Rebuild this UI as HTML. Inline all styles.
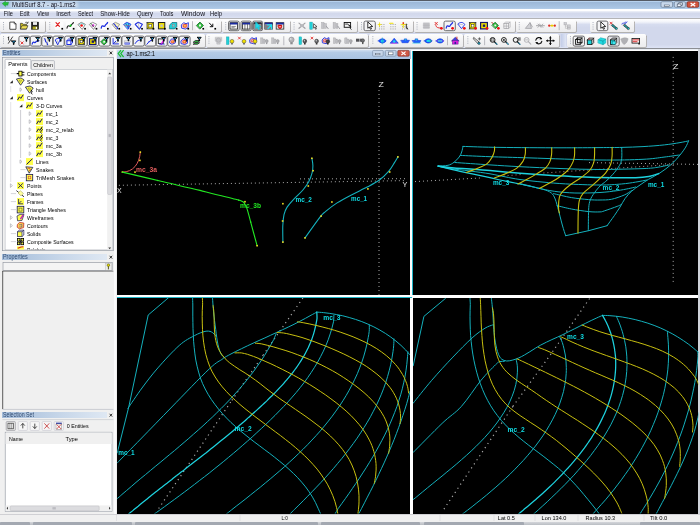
<!DOCTYPE html>
<html>
<head>
<meta charset="utf-8">
<title>MultiSurf 8.7 - ap-1.ms2</title>
<style>
html,body{margin:0;padding:0;}
body{width:700px;height:525px;overflow:hidden;position:relative;background:#d5dcee;font-family:"Liberation Sans",sans-serif;}
.a{position:absolute;}
svg{position:absolute;left:0;top:0;}
svg text{font-family:"Liberation Sans",sans-serif;white-space:pre;}
</style>
</head>
<body>
<div class="a" style="left:0px;top:0px;width:700px;height:9px;background:linear-gradient(#97b3d3,#a2bedd 50%,#abc7e5 92%,#b9d2ec);"></div>
<div class="a" style="left:0px;top:0px;width:700px;height:0.9px;background:#555c66;"></div>
<div class="a" style="left:0px;top:0.9px;width:700px;height:0.8px;background:#b7d2ee;"></div>
<div class="a" style="left:0px;top:9px;width:700px;height:9.6px;background:linear-gradient(#ffffff,#ffffff 20%,#e4e8f4 26%,#d3d9ec 45%,#d5dbee 70%,#e1e7f8);"></div>
<div class="a" style="left:0px;top:17.8px;width:700px;height:0.9px;background:#b4b4b6;"></div>
<div class="a" style="left:0px;top:18.7px;width:700px;height:29.4px;background:linear-gradient(#ffffff,#f2f4fa 10%,#d6dcef 19%,#d2d8ec 30%,#d2d8ec 88%,#dde3f5);"></div>
<div class="a" style="left:0px;top:47.8px;width:700px;height:1.2px;background:#8c8e94;"></div>
<div class="a" style="left:0px;top:19.5px;width:45.3px;height:12.5px;background:linear-gradient(#fdfdfd,#f3f3f4 50%,#ececee);border-radius:1.5px;box-shadow:0.7px 0.7px 0 #a8a49c;"></div>
<div class="a" style="left:46.3px;top:19.5px;width:175.10000000000002px;height:12.5px;background:linear-gradient(#fdfdfd,#f3f3f4 50%,#ececee);border-radius:1.5px;box-shadow:0.7px 0.7px 0 #a8a49c;"></div>
<div class="a" style="left:222.3px;top:19.5px;width:67.39999999999998px;height:12.5px;background:linear-gradient(#fdfdfd,#f3f3f4 50%,#ececee);border-radius:1.5px;box-shadow:0.7px 0.7px 0 #a8a49c;"></div>
<div class="a" style="left:290.6px;top:19.5px;width:66.39999999999998px;height:12.5px;background:linear-gradient(#fdfdfd,#f3f3f4 50%,#ececee);border-radius:1.5px;box-shadow:0.7px 0.7px 0 #a8a49c;"></div>
<div class="a" style="left:358px;top:19.5px;width:54.60000000000002px;height:12.5px;background:linear-gradient(#fdfdfd,#f3f3f4 50%,#ececee);border-radius:1.5px;box-shadow:0.7px 0.7px 0 #a8a49c;"></div>
<div class="a" style="left:413.6px;top:19.5px;width:101.0px;height:12.5px;background:linear-gradient(#fdfdfd,#f3f3f4 50%,#ececee);border-radius:1.5px;box-shadow:0.7px 0.7px 0 #a8a49c;"></div>
<div class="a" style="left:515.8px;top:19.5px;width:60.60000000000002px;height:12.5px;background:linear-gradient(#fdfdfd,#f3f3f4 50%,#ececee);border-radius:1.5px;box-shadow:0.7px 0.7px 0 #a8a49c;"></div>
<div class="a" style="left:589.6px;top:19.5px;width:44.799999999999955px;height:12.5px;background:linear-gradient(#fdfdfd,#f3f3f4 50%,#ececee);border-radius:1.5px;box-shadow:0.7px 0.7px 0 #a8a49c;"></div>
<div class="a" style="left:0px;top:33.6px;width:204.6px;height:13.399999999999999px;background:linear-gradient(#fdfdfd,#f3f3f4 50%,#ececee);border-radius:1.5px;box-shadow:0.7px 0.7px 0 #a8a49c;"></div>
<div class="a" style="left:205.5px;top:33.6px;width:162.89999999999998px;height:13.399999999999999px;background:linear-gradient(#fdfdfd,#f3f3f4 50%,#ececee);border-radius:1.5px;box-shadow:0.7px 0.7px 0 #a8a49c;"></div>
<div class="a" style="left:369.4px;top:33.6px;width:94.10000000000002px;height:13.399999999999999px;background:linear-gradient(#fdfdfd,#f3f3f4 50%,#ececee);border-radius:1.5px;box-shadow:0.7px 0.7px 0 #a8a49c;"></div>
<div class="a" style="left:464.4px;top:33.6px;width:94.20000000000005px;height:13.399999999999999px;background:linear-gradient(#fdfdfd,#f3f3f4 50%,#ececee);border-radius:1.5px;box-shadow:0.7px 0.7px 0 #a8a49c;"></div>
<div class="a" style="left:567px;top:33.6px;width:78.70000000000005px;height:13.399999999999999px;background:linear-gradient(#fdfdfd,#f3f3f4 50%,#ececee);border-radius:1.5px;box-shadow:0.7px 0.7px 0 #a8a49c;"></div>
<div class="a" style="left:560.7px;top:33.6px;width:5px;height:13.4px;background:linear-gradient(90deg,#c3cde8,#dfe5f4);"></div>
<div class="a" style="left:0px;top:48.5px;width:116.5px;height:465.5px;background:#f0f0f0;"></div>
<div class="a" style="left:113.8px;top:48.5px;width:2.7px;height:465.5px;background:#fbfbfc;"></div>
<div class="a" style="left:2.4px;top:49.9px;width:105px;height:6px;background:linear-gradient(90deg,#a3bcda,#c9d8ea 60%,#dfe8f3);"></div>
<div class="a" style="left:2.4px;top:254.2px;width:105px;height:6px;background:linear-gradient(90deg,#a3bcda,#c9d8ea 60%,#dfe8f3);"></div>
<div class="a" style="left:2.4px;top:412.2px;width:105px;height:6px;background:linear-gradient(90deg,#a3bcda,#c9d8ea 60%,#dfe8f3);"></div>
<div class="a" style="left:116.5px;top:48.5px;width:583.5px;height:465.5px;background:#ffffff;"></div>
<div class="a" style="left:116.5px;top:48.6px;width:294px;height:10px;background:linear-gradient(#dbe6f4,#b4cbe6 35%,#a9c3e2);"></div>
<div class="a" style="left:116.5px;top:48.5px;width:583.5px;height:1px;background:#e8ecf2;"></div>
<div class="a" style="left:117.2px;top:58.6px;width:292.8px;height:236.2px;background:#000;"></div>
<div class="a" style="left:413px;top:51.4px;width:285.6px;height:243.8px;background:#000;"></div>
<div class="a" style="left:117.2px;top:297.6px;width:292.8px;height:216px;background:#000;"></div>
<div class="a" style="left:413px;top:298.2px;width:285.6px;height:215.4px;background:#000;"></div>
<div class="a" style="left:412.1px;top:51.4px;width:0.9px;height:244px;background:#1fb6c8;"></div>
<div class="a" style="left:116.5px;top:296.6px;width:295.6px;height:0.9px;background:#1fb6c8;"></div>
<div class="a" style="left:698.4px;top:48.5px;width:1.6px;height:465.5px;background:#cfd3da;"></div>
<div class="a" style="left:0px;top:513.8px;width:700px;height:7.8px;background:#f0f0f0;"></div>
<div class="a" style="left:0px;top:513.6px;width:700px;height:0.6px;background:#d0d0d4;"></div>
<div class="a" style="left:0px;top:521.6px;width:700px;height:3.4px;background:linear-gradient(#d4d6da,#b9bdc3);"></div>
<div class="a" style="left:0px;top:522.4px;width:30px;height:2.6px;background:#a3a8b1;border-radius:1px 1px 0 0;"></div>
<div class="a" style="left:33px;top:522.4px;width:99px;height:2.6px;background:#a3a8b1;border-radius:1px 1px 0 0;"></div>
<div class="a" style="left:135px;top:522.4px;width:183px;height:2.6px;background:#a3a8b1;border-radius:1px 1px 0 0;"></div>
<div class="a" style="left:321px;top:522.4px;width:99px;height:2.6px;background:#a3a8b1;border-radius:1px 1px 0 0;"></div>
<div class="a" style="left:424px;top:522.4px;width:100px;height:2.6px;background:#a3a8b1;border-radius:1px 1px 0 0;"></div>
<div class="a" style="left:640px;top:522.4px;width:60px;height:2.6px;background:#a3a8b1;border-radius:1px 1px 0 0;"></div>
<svg width="700" height="525" viewBox="0 0 700 525" style="will-change:transform">
<path d="M2.2 3.6 L5.5 1.2 L5.5 2.6 L8.6 2.2 L7.8 5.2 L5.5 5 L5.5 6.6 Z" stroke="#178a2a" fill="#22c23a" stroke-width="0.4" />
<filter id="glow" x="-20%" y="-100%" width="140%" height="300%"><feGaussianBlur stdDeviation="1.6"/></filter>
<rect x="10" y="2" width="68" height="5.6" fill="#ffffff" opacity="0.45" filter="url(#glow)"/>
<text x="12" y="6.6" font-size="7.0" fill="#0b0b1a" textLength="63.5" lengthAdjust="spacingAndGlyphs">MultiSurf 8.7 - ap-1.ms2</text>
<rect x="661" y="1.7" width="11.6" height="5.6" fill="#c9d9ec" stroke="#6d7f96" stroke-width="0.7" rx="1.2"/>
<rect x="664.2" y="5" width="5.2" height="1.3" fill="#fff" stroke="#39475c" stroke-width="0.5"/>
<rect x="674.3" y="1.7" width="11.1" height="5.6" fill="#c9d9ec" stroke="#6d7f96" stroke-width="0.7" rx="1.2"/>
<rect x="678.8" y="2.8" width="3.8" height="2.6" fill="#eef3fa" stroke="#39475c" stroke-width="0.6"/>
<rect x="677.2" y="4" width="3.8" height="2.6" fill="#eef3fa" stroke="#39475c" stroke-width="0.6"/>
<rect x="687" y="1.7" width="11.7" height="5.6" fill="#d2533c" stroke="#7c2a20" stroke-width="0.7" rx="1.2"/>
<path d="M690.6 2.9 L695.2 6.3 M695.2 2.9 L690.6 6.3" stroke="#fff" fill="none" stroke-width="1.3" />
<text x="3.8" y="15.6" font-size="6.6" fill="#101018" textLength="9.1" lengthAdjust="spacingAndGlyphs">File</text>
<text x="19.7" y="15.6" font-size="6.6" fill="#101018" textLength="9.8" lengthAdjust="spacingAndGlyphs">Edit</text>
<text x="36.9" y="15.6" font-size="6.6" fill="#101018" textLength="12.1" lengthAdjust="spacingAndGlyphs">View</text>
<text x="56.3" y="15.6" font-size="6.6" fill="#101018" textLength="14.4" lengthAdjust="spacingAndGlyphs">Insert</text>
<text x="78" y="15.6" font-size="6.6" fill="#101018" textLength="15" lengthAdjust="spacingAndGlyphs">Select</text>
<text x="100.3" y="15.6" font-size="6.6" fill="#101018" textLength="29.7" lengthAdjust="spacingAndGlyphs">Show-Hide</text>
<text x="137" y="15.6" font-size="6.6" fill="#101018" textLength="16" lengthAdjust="spacingAndGlyphs">Query</text>
<text x="160" y="15.6" font-size="6.6" fill="#101018" textLength="13.5" lengthAdjust="spacingAndGlyphs">Tools</text>
<text x="181" y="15.6" font-size="6.6" fill="#101018" textLength="24" lengthAdjust="spacingAndGlyphs">Window</text>
<text x="210" y="15.6" font-size="6.6" fill="#101018" textLength="12" lengthAdjust="spacingAndGlyphs">Help</text>
<rect x="3.0" y="22.1" width="0.9" height="0.9" fill="#9aa0ae"/>
<rect x="3.0" y="24.3" width="0.9" height="0.9" fill="#9aa0ae"/>
<rect x="3.0" y="26.5" width="0.9" height="0.9" fill="#9aa0ae"/>
<rect x="3.0" y="28.700000000000003" width="0.9" height="0.9" fill="#9aa0ae"/>
<rect x="49.3" y="22.1" width="0.9" height="0.9" fill="#9aa0ae"/>
<rect x="49.3" y="24.3" width="0.9" height="0.9" fill="#9aa0ae"/>
<rect x="49.3" y="26.5" width="0.9" height="0.9" fill="#9aa0ae"/>
<rect x="49.3" y="28.700000000000003" width="0.9" height="0.9" fill="#9aa0ae"/>
<rect x="225.3" y="22.1" width="0.9" height="0.9" fill="#9aa0ae"/>
<rect x="225.3" y="24.3" width="0.9" height="0.9" fill="#9aa0ae"/>
<rect x="225.3" y="26.5" width="0.9" height="0.9" fill="#9aa0ae"/>
<rect x="225.3" y="28.700000000000003" width="0.9" height="0.9" fill="#9aa0ae"/>
<rect x="293.6" y="22.1" width="0.9" height="0.9" fill="#9aa0ae"/>
<rect x="293.6" y="24.3" width="0.9" height="0.9" fill="#9aa0ae"/>
<rect x="293.6" y="26.5" width="0.9" height="0.9" fill="#9aa0ae"/>
<rect x="293.6" y="28.700000000000003" width="0.9" height="0.9" fill="#9aa0ae"/>
<rect x="361.0" y="22.1" width="0.9" height="0.9" fill="#9aa0ae"/>
<rect x="361.0" y="24.3" width="0.9" height="0.9" fill="#9aa0ae"/>
<rect x="361.0" y="26.5" width="0.9" height="0.9" fill="#9aa0ae"/>
<rect x="361.0" y="28.700000000000003" width="0.9" height="0.9" fill="#9aa0ae"/>
<rect x="416.6" y="22.1" width="0.9" height="0.9" fill="#9aa0ae"/>
<rect x="416.6" y="24.3" width="0.9" height="0.9" fill="#9aa0ae"/>
<rect x="416.6" y="26.5" width="0.9" height="0.9" fill="#9aa0ae"/>
<rect x="416.6" y="28.700000000000003" width="0.9" height="0.9" fill="#9aa0ae"/>
<rect x="518.8" y="22.1" width="0.9" height="0.9" fill="#9aa0ae"/>
<rect x="518.8" y="24.3" width="0.9" height="0.9" fill="#9aa0ae"/>
<rect x="518.8" y="26.5" width="0.9" height="0.9" fill="#9aa0ae"/>
<rect x="518.8" y="28.700000000000003" width="0.9" height="0.9" fill="#9aa0ae"/>
<rect x="592.6" y="22.1" width="0.9" height="0.9" fill="#9aa0ae"/>
<rect x="592.6" y="24.3" width="0.9" height="0.9" fill="#9aa0ae"/>
<rect x="592.6" y="26.5" width="0.9" height="0.9" fill="#9aa0ae"/>
<rect x="592.6" y="28.700000000000003" width="0.9" height="0.9" fill="#9aa0ae"/>
<rect x="3.0" y="36.2" width="0.9" height="0.9" fill="#9aa0ae"/>
<rect x="3.0" y="38.400000000000006" width="0.9" height="0.9" fill="#9aa0ae"/>
<rect x="3.0" y="40.6" width="0.9" height="0.9" fill="#9aa0ae"/>
<rect x="3.0" y="42.800000000000004" width="0.9" height="0.9" fill="#9aa0ae"/>
<rect x="208.5" y="36.2" width="0.9" height="0.9" fill="#9aa0ae"/>
<rect x="208.5" y="38.400000000000006" width="0.9" height="0.9" fill="#9aa0ae"/>
<rect x="208.5" y="40.6" width="0.9" height="0.9" fill="#9aa0ae"/>
<rect x="208.5" y="42.800000000000004" width="0.9" height="0.9" fill="#9aa0ae"/>
<rect x="372.4" y="36.2" width="0.9" height="0.9" fill="#9aa0ae"/>
<rect x="372.4" y="38.400000000000006" width="0.9" height="0.9" fill="#9aa0ae"/>
<rect x="372.4" y="40.6" width="0.9" height="0.9" fill="#9aa0ae"/>
<rect x="372.4" y="42.800000000000004" width="0.9" height="0.9" fill="#9aa0ae"/>
<rect x="467.4" y="36.2" width="0.9" height="0.9" fill="#9aa0ae"/>
<rect x="467.4" y="38.400000000000006" width="0.9" height="0.9" fill="#9aa0ae"/>
<rect x="467.4" y="40.6" width="0.9" height="0.9" fill="#9aa0ae"/>
<rect x="467.4" y="42.800000000000004" width="0.9" height="0.9" fill="#9aa0ae"/>
<rect x="570.0" y="36.2" width="0.9" height="0.9" fill="#9aa0ae"/>
<rect x="570.0" y="38.400000000000006" width="0.9" height="0.9" fill="#9aa0ae"/>
<rect x="570.0" y="40.6" width="0.9" height="0.9" fill="#9aa0ae"/>
<rect x="570.0" y="42.800000000000004" width="0.9" height="0.9" fill="#9aa0ae"/>
<text x="3" y="55.0" font-size="6.6" fill="#2f4a70" textLength="17.5" lengthAdjust="spacingAndGlyphs">Entities</text>
<path d="M109.6 51.5 l2.6 2.8 m0 -2.8 l-2.6 2.8" stroke="#000" fill="none" stroke-width="0.8" />
<rect x="2.4" y="57.3" width="111" height="193.4" fill="#f0f0f0" stroke="#8a8f99" stroke-width="0.6"/>
<rect x="31.3" y="60.6" width="23.1" height="8.8" fill="#f0f0f0" stroke="#9aa0aa" stroke-width="0.6" rx="0.8"/>
<rect x="5.1" y="59.3" width="25.7" height="10.2" fill="#ffffff" stroke="#9aa0aa" stroke-width="0.6" rx="0.8"/>
<text x="8.3" y="66.3" font-size="6.2" fill="#000" textLength="19.2" lengthAdjust="spacingAndGlyphs">Parents</text>
<text x="33.3" y="66.6" font-size="6.2" fill="#000" textLength="19.6" lengthAdjust="spacingAndGlyphs">Children</text>
<rect x="5.1" y="69.3" width="107.2" height="180.6" fill="#ffffff" stroke="#a8adb6" stroke-width="0.5"/>
<rect x="5.1" y="68.8" width="25.7" height="1.2" fill="#ffffff"/>
<rect x="107.2" y="69.6" width="5" height="180" fill="#f1f1f1"/>
<rect x="107.6" y="77" width="4.2" height="117.5" fill="#dcdcdf" stroke="#b4b4ba" stroke-width="0.4" rx="1"/>
<line x1="108.6" y1="134.4" x2="110.8" y2="134.4" stroke="#8d8d95" stroke-width="0.5"/>
<line x1="108.6" y1="135.5" x2="110.8" y2="135.5" stroke="#8d8d95" stroke-width="0.5"/>
<line x1="108.6" y1="136.6" x2="110.8" y2="136.6" stroke="#8d8d95" stroke-width="0.5"/>
<path d="M108.3 74.2 l1.4 -1.6 l1.4 1.6 z" stroke="none" fill="#333" stroke-width="1" />
<path d="M108.3 247.6 l1.4 1.6 l1.4 -1.6 z" stroke="none" fill="#333" stroke-width="1" />
<line x1="10.7" y1="86" x2="10.7" y2="92" stroke="#d8d8dc" stroke-width="0.7"/>
<line x1="10.7" y1="102" x2="10.7" y2="182" stroke="#d8d8dc" stroke-width="0.7"/>
<line x1="20.6" y1="110" x2="20.6" y2="158" stroke="#b8b8c0" stroke-width="0.7"/>
<rect x="18.8" y="71.19999999999999" width="3.2" height="4.8" fill="#ffff4d" stroke="#000" stroke-width="0.8"/>
<line x1="16.6" y1="73.6" x2="18.8" y2="73.6" stroke="#000" stroke-width="1.2"/>
<line x1="22" y1="72.3" x2="24.4" y2="72.3" stroke="#000" stroke-width="0.9"/>
<line x1="22" y1="74.89999999999999" x2="24.4" y2="74.89999999999999" stroke="#000" stroke-width="0.9"/>
<text x="27" y="75.5" font-size="6.2" fill="#000" textLength="29" lengthAdjust="spacingAndGlyphs">Components</text>
<line x1="10.8" y1="73.6" x2="16.0" y2="73.6" stroke="#b8b8c0" stroke-width="0.6"/>
<path d="M16.4 79.0 L21 78.0 L24.2 80.0 L20.6 85.19999999999999 Z" stroke="#1a1a50" fill="#ffff4d" stroke-width="0.8" />
<path d="M19 80.0 L21.6 80.19999999999999 L20.4 82.39999999999999 Z" stroke="#777733" fill="none" stroke-width="0.5" />
<text x="27" y="83.5" font-size="6.2" fill="#000" textLength="20.1" lengthAdjust="spacingAndGlyphs">Surfaces</text>
<path d="M12.8 80.19999999999999 L12.8 83.19999999999999 L9.8 83.19999999999999 Z" stroke="none" fill="#222" stroke-width="1" />
<path d="M25.4 87.0 L30 86.0 L33.2 88.0 L29.6 93.19999999999999 Z" stroke="#1a1a50" fill="#ffff4d" stroke-width="0.8" />
<path d="M28 88.0 L30.6 88.19999999999999 L29.4 90.39999999999999 Z" stroke="#777733" fill="none" stroke-width="0.5" />
<path d="M30.6 90.19999999999999 q2.6 0.6 1 2.4 q-0.8 1 0.8 1.6" stroke="#000" fill="none" stroke-width="0.9" />
<text x="36" y="91.5" font-size="6.2" fill="#000" textLength="8" lengthAdjust="spacingAndGlyphs">hull</text>
<path d="M20 87.8 L22 89.6 L20 91.39999999999999 Z" stroke="#8a8a92" fill="#fff" stroke-width="0.5" />
<rect x="17" y="94.1" width="7" height="7" fill="#ffff4d"/>
<path d="M17.6 100.0 L19.4 96.8 L20.8 98.39999999999999 L23.2 94.8" stroke="#14145a" fill="none" stroke-width="1.0" />
<text x="27" y="99.5" font-size="6.2" fill="#000" textLength="16" lengthAdjust="spacingAndGlyphs">Curves</text>
<path d="M12.8 96.19999999999999 L12.8 99.19999999999999 L9.8 99.19999999999999 Z" stroke="none" fill="#222" stroke-width="1" />
<rect x="26" y="102.1" width="7" height="7" fill="#ffff4d"/>
<path d="M26.6 108.0 L28.4 104.8 L29.8 106.39999999999999 L32.2 102.8" stroke="#14145a" fill="none" stroke-width="1.0" />
<text x="36" y="107.5" font-size="6.2" fill="#000" textLength="26.5" lengthAdjust="spacingAndGlyphs">3-D Curves</text>
<path d="M22.4 104.19999999999999 L22.4 107.19999999999999 L19.4 107.19999999999999 Z" stroke="none" fill="#222" stroke-width="1" />
<rect x="36" y="110.1" width="7" height="7" fill="#ffff4d"/>
<path d="M36.6 116.0 L38.4 112.8 L39.8 114.39999999999999 L42.2 110.8" stroke="#14145a" fill="none" stroke-width="1.0" />
<text x="45.8" y="115.5" font-size="6.2" fill="#000" textLength="12.3" lengthAdjust="spacingAndGlyphs">mc_1</text>
<path d="M29.2 111.8 L31.2 113.6 L29.2 115.39999999999999 Z" stroke="#8a8a92" fill="#fff" stroke-width="0.5" />
<rect x="36" y="118.1" width="7" height="7" fill="#ffff4d"/>
<path d="M36.6 124.0 L38.4 120.8 L39.8 122.39999999999999 L42.2 118.8" stroke="#14145a" fill="none" stroke-width="1.0" />
<text x="45.8" y="123.5" font-size="6.2" fill="#000" textLength="12.6" lengthAdjust="spacingAndGlyphs">mc_2</text>
<path d="M29.2 119.8 L31.2 121.6 L29.2 123.39999999999999 Z" stroke="#8a8a92" fill="#fff" stroke-width="0.5" />
<rect x="36" y="126.1" width="7" height="7" fill="#ffff4d"/>
<path d="M36.6 132.0 L38.4 128.79999999999998 L39.8 130.4 L42.2 126.8" stroke="#14145a" fill="none" stroke-width="1.0" />
<path d="M41.2 128.1 q2.4 1.5 0 3 q-1.6 1.4 0.6 2.4" stroke="#000" fill="none" stroke-width="0.8" />
<text x="45.8" y="131.5" font-size="6.2" fill="#000" textLength="27.9" lengthAdjust="spacingAndGlyphs">mc_2_relab</text>
<path d="M29.2 127.8 L31.2 129.6 L29.2 131.4 Z" stroke="#8a8a92" fill="#fff" stroke-width="0.5" />
<rect x="36" y="134.1" width="7" height="7" fill="#ffff4d"/>
<path d="M36.6 140.0 L38.4 136.79999999999998 L39.8 138.4 L42.2 134.79999999999998" stroke="#14145a" fill="none" stroke-width="1.0" />
<path d="M41.2 136.1 q2.4 1.5 0 3 q-1.6 1.4 0.6 2.4" stroke="#000" fill="none" stroke-width="0.8" />
<text x="45.8" y="139.5" font-size="6.2" fill="#000" textLength="12.6" lengthAdjust="spacingAndGlyphs">mc_3</text>
<path d="M29.2 135.79999999999998 L31.2 137.6 L29.2 139.4 Z" stroke="#8a8a92" fill="#fff" stroke-width="0.5" />
<rect x="36" y="142.1" width="7" height="7" fill="#ffff4d"/>
<path d="M36.6 148.0 L38.4 144.79999999999998 L39.8 146.4 L42.2 142.79999999999998" stroke="#14145a" fill="none" stroke-width="1.0" />
<text x="45.8" y="147.5" font-size="6.2" fill="#000" textLength="16" lengthAdjust="spacingAndGlyphs">mc_3a</text>
<path d="M29.2 143.79999999999998 L31.2 145.6 L29.2 147.4 Z" stroke="#8a8a92" fill="#fff" stroke-width="0.5" />
<rect x="36" y="150.1" width="7" height="7" fill="#ffff4d"/>
<path d="M36.6 156.0 L38.4 152.79999999999998 L39.8 154.4 L42.2 150.79999999999998" stroke="#14145a" fill="none" stroke-width="1.0" />
<text x="45.8" y="155.5" font-size="6.2" fill="#000" textLength="16.2" lengthAdjust="spacingAndGlyphs">mc_3b</text>
<path d="M29.2 151.79999999999998 L31.2 153.6 L29.2 155.4 Z" stroke="#8a8a92" fill="#fff" stroke-width="0.5" />
<rect x="26" y="158.1" width="7" height="7" fill="#ffff4d"/>
<line x1="26.6" y1="164.4" x2="32.4" y2="158.79999999999998" stroke="#14145a" stroke-width="1"/>
<text x="36" y="163.5" font-size="6.2" fill="#000" textLength="12.6" lengthAdjust="spacingAndGlyphs">Lines</text>
<path d="M20 159.79999999999998 L22 161.6 L20 163.4 Z" stroke="#8a8a92" fill="#fff" stroke-width="0.5" />
<path d="M25.8 166.79999999999998 L32.8 167.4 L29.2 173.2 Z" stroke="#1a1a50" fill="#ffff4d" stroke-width="0.8" />
<path d="M27.6 168.4 q2 -1 2.6 0.6 q0.4 1.4 -1 1.8" stroke="#d02020" fill="none" stroke-width="0.8" />
<text x="36" y="171.5" font-size="6.2" fill="#000" textLength="17.6" lengthAdjust="spacingAndGlyphs">Snakes</text>
<line x1="20.4" y1="169.6" x2="25.6" y2="169.6" stroke="#b8b8c0" stroke-width="0.6"/>
<rect x="26.3" y="174.4" width="6.4" height="6.4" fill="#ffff4d" stroke="#1a1a50" stroke-width="0.8"/>
<rect x="28.2" y="176.2" width="2.6" height="2.6" fill="none" stroke="#d04040" stroke-width="0.6"/>
<text x="36" y="179.5" font-size="6.2" fill="#000" textLength="38.4" lengthAdjust="spacingAndGlyphs">TriMesh Snakes</text>
<line x1="20.4" y1="177.6" x2="25.6" y2="177.6" stroke="#b8b8c0" stroke-width="0.6"/>
<rect x="17" y="182.1" width="7" height="7" fill="#ffff4d"/>
<path d="M18.2 183.4 L22.8 187.79999999999998 M22.8 183.4 L18.2 187.79999999999998" stroke="#14145a" fill="none" stroke-width="0.9" />
<text x="27" y="187.5" font-size="6.2" fill="#000" textLength="14.6" lengthAdjust="spacingAndGlyphs">Points</text>
<path d="M10.4 183.79999999999998 L12.4 185.6 L10.4 187.4 Z" stroke="#8a8a92" fill="#fff" stroke-width="0.5" />
<path d="M16.4 190.6 L24 196.79999999999998" stroke="#222" fill="none" stroke-width="0.9" />
<path d="M18 193.0 L20.4 190.79999999999998 L23.4 193.4 L21 195.79999999999998 Z" stroke="#999940" fill="#ffffa0" stroke-width="0.5" />
<text x="27" y="195.5" font-size="6.2" fill="#000" textLength="15.8" lengthAdjust="spacingAndGlyphs">Planes</text>
<line x1="10.8" y1="193.6" x2="16.0" y2="193.6" stroke="#b8b8c0" stroke-width="0.6"/>
<rect x="17" y="198.1" width="7" height="7" fill="#ffff4d"/>
<path d="M18.6 199.0 L18.6 203.79999999999998 L23 203.79999999999998 M18.6 203.79999999999998 L21.4 201.0" stroke="#14145a" fill="none" stroke-width="0.8" />
<text x="27" y="203.5" font-size="6.2" fill="#000" textLength="16.5" lengthAdjust="spacingAndGlyphs">Frames</text>
<line x1="10.8" y1="201.6" x2="16.0" y2="201.6" stroke="#b8b8c0" stroke-width="0.6"/>
<rect x="17.2" y="206.29999999999998" width="6.6" height="6.6" fill="#ffff4d" stroke="#1a1a50" stroke-width="0.8"/>
<rect x="19" y="208.1" width="3" height="3" fill="none" stroke="#555520" stroke-width="0.6"/>
<text x="27" y="211.5" font-size="6.2" fill="#000" textLength="38.9" lengthAdjust="spacingAndGlyphs">Triangle Meshes</text>
<line x1="10.8" y1="209.6" x2="16.0" y2="209.6" stroke="#b8b8c0" stroke-width="0.6"/>
<path d="M17 216.0 L20 214.4 L24 214.4 L22 220.4 L17.6 220.79999999999998 Z" stroke="#1a1a50" fill="#ffff4d" stroke-width="0.7" />
<path d="M20.4 219.2 L23.2 215.0" stroke="#c020c0" fill="none" stroke-width="1.4" />
<text x="27" y="219.5" font-size="6.2" fill="#000" textLength="26.5" lengthAdjust="spacingAndGlyphs">Wireframes</text>
<path d="M10.4 215.79999999999998 L12.4 217.6 L10.4 219.4 Z" stroke="#8a8a92" fill="#fff" stroke-width="0.5" />
<path d="M17.4 224.6 L19.4 222.4 L23.8 223.0 L23.6 227.6 L19.4 228.79999999999998 L17.2 227.2 Z" stroke="#c03030" fill="#ffd24d" stroke-width="0.8" />
<path d="M19 224.79999999999998 L22 224.6 L21.8 227.0 L19.2 227.0" stroke="#2020a0" fill="none" stroke-width="0.5" />
<text x="27" y="227.5" font-size="6.2" fill="#000" textLength="20.8" lengthAdjust="spacingAndGlyphs">Contours</text>
<path d="M10.4 223.79999999999998 L12.4 225.6 L10.4 227.4 Z" stroke="#8a8a92" fill="#fff" stroke-width="0.5" />
<rect x="17.4" y="231.79999999999998" width="4.6" height="4.8" fill="#ffff4d" stroke="#1a1a50" stroke-width="0.7"/>
<path d="M17.4 231.79999999999998 L19.2 230.2 L23.8 230.2 L23.8 235.0 L22 236.6 M22 231.79999999999998 L23.8 230.2" stroke="#1a1a50" fill="none" stroke-width="0.7" />
<text x="27" y="235.5" font-size="6.2" fill="#000" textLength="13.7" lengthAdjust="spacingAndGlyphs">Solids</text>
<line x1="10.8" y1="233.6" x2="16.0" y2="233.6" stroke="#b8b8c0" stroke-width="0.6"/>
<rect x="17.4" y="238.5" width="2.6" height="2.6" fill="#ffff4d" stroke="#000" stroke-width="0.8"/>
<rect x="21" y="238.5" width="2.6" height="2.6" fill="#ffff4d" stroke="#000" stroke-width="0.8"/>
<rect x="17.4" y="242.1" width="2.6" height="2.6" fill="#ffff4d" stroke="#000" stroke-width="0.8"/>
<rect x="21" y="242.1" width="2.6" height="2.6" fill="#ffff4d" stroke="#000" stroke-width="0.8"/>
<path d="M19.2 239.6 L22 243.6 M22 239.6 L19.2 243.6" stroke="#000" fill="none" stroke-width="0.6" />
<text x="27" y="243.5" font-size="6.2" fill="#000" textLength="46.6" lengthAdjust="spacingAndGlyphs">Composite Surfaces</text>
<line x1="10.8" y1="241.6" x2="16.0" y2="241.6" stroke="#b8b8c0" stroke-width="0.6"/>
<clipPath id="treeclip"><rect x="5" y="69" width="102" height="180.6"/></clipPath>
<g clip-path="url(#treeclip)">
<rect x="17" y="246.3" width="7" height="7" fill="#ffff4d"/>
<path d="M17.8 248.20000000000002 L21 247.0 L23.4 246.8" stroke="#d02020" fill="none" stroke-width="1.1" />
<text x="27" y="251.8" font-size="6.2" fill="#101010" textLength="18.5" lengthAdjust="spacingAndGlyphs">Relabels</text>
</g>
<text x="3" y="259.3" font-size="6.6" fill="#2f4a70" textLength="24.6" lengthAdjust="spacingAndGlyphs">Properties</text>
<path d="M109.6 255.79999999999998 l2.6 2.8 m0 -2.8 l-2.6 2.8" stroke="#000" fill="none" stroke-width="0.8" />
<rect x="2.4" y="261.8" width="111" height="147.5" fill="#f0f0f0"/>
<line x1="2.4" y1="409.4" x2="113.4" y2="409.4" stroke="#b0b4bc" stroke-width="0.6"/>
<rect x="3" y="262.6" width="109.2" height="8" fill="#f4f4f4" stroke="#8a8f99" stroke-width="0.6"/>
<rect x="105.6" y="263.2" width="6" height="7" fill="#ececec" stroke="#b0b0b0" stroke-width="0.4"/>
<circle cx="108.4" cy="265.2" r="1.3" fill="#e6d800" stroke="#4a4a00" stroke-width="0.5"/>
<line x1="108.4" y1="266.4" x2="108.4" y2="269.4" stroke="#4a4a00" stroke-width="0.9"/>
<line x1="2.4" y1="271.2" x2="113.4" y2="271.2" stroke="#555" stroke-width="0.7"/>
<line x1="2.7" y1="271" x2="2.7" y2="409" stroke="#333" stroke-width="0.8"/>
<text x="3" y="417.3" font-size="6.6" fill="#2f4a70" textLength="31" lengthAdjust="spacingAndGlyphs">Selection Set</text>
<path d="M109.6 413.8 l2.6 2.8 m0 -2.8 l-2.6 2.8" stroke="#000" fill="none" stroke-width="0.8" />
<rect x="2.4" y="419.6" width="111" height="93.4" fill="#f0f0f0"/>
<line x1="2.4" y1="419.6" x2="113.4" y2="419.6" stroke="#b8bcc4" stroke-width="0.5"/>
<rect x="6.2" y="421.6" width="9.2" height="8.8" fill="#e4e4e4" stroke="#8c8c94" stroke-width="0.6" rx="0.8"/>
<rect x="18.2" y="421.6" width="9.2" height="8.8" fill="#f6f6f6" stroke="#c4c4cc" stroke-width="0.6" rx="0.8"/>
<rect x="30.2" y="421.6" width="9.2" height="8.8" fill="#f6f6f6" stroke="#c4c4cc" stroke-width="0.6" rx="0.8"/>
<rect x="42.2" y="421.6" width="9.2" height="8.8" fill="#f6f6f6" stroke="#c4c4cc" stroke-width="0.6" rx="0.8"/>
<rect x="54.2" y="421.6" width="9.2" height="8.8" fill="#f6f6f6" stroke="#c4c4cc" stroke-width="0.6" rx="0.8"/>
<rect x="8" y="423.2" width="5.6" height="5.6" fill="#fff" stroke="#222" stroke-width="0.6"/>
<line x1="9.9" y1="423.2" x2="9.9" y2="428.8" stroke="#222" stroke-width="0.5"/>
<line x1="11.8" y1="423.2" x2="11.8" y2="428.8" stroke="#222" stroke-width="0.5"/>
<path d="M22.8 428.4 L22.8 423.6 M20.8 425.6 L22.8 423.4 L24.8 425.6" stroke="#222" fill="none" stroke-width="0.8" />
<path d="M34.8 423.6 L34.8 428.4 M32.8 426.4 L34.8 428.6 L36.8 426.4" stroke="#222" fill="none" stroke-width="0.8" />
<path d="M44.4 423.4 L49.2 428.6 M49.2 423.4 L44.4 428.6" stroke="#c02828" fill="none" stroke-width="0.8" />
<rect x="56" y="422.6" width="5.8" height="1.4" fill="#3a4ab0"/>
<rect x="56" y="424" width="5.8" height="5.2" fill="#fff" stroke="#666" stroke-width="0.4"/>
<path d="M56.6 424.4 L61.2 429 M61.2 424.4 L56.6 429" stroke="#c02828" fill="none" stroke-width="0.8" />
<text x="66.7" y="428.2" font-size="6.2" fill="#000" textLength="21.9" lengthAdjust="spacingAndGlyphs">0 Entities</text>
<rect x="5.2" y="432.2" width="106.8" height="79.2" fill="#fff" stroke="#8a8f99" stroke-width="0.6"/>
<rect x="5.6" y="432.6" width="106" height="11.4" fill="#f0f0f0"/>
<text x="9" y="440.8" font-size="6.2" fill="#000" textLength="14" lengthAdjust="spacingAndGlyphs">Name</text>
<text x="65.5" y="440.8" font-size="6.2" fill="#000" textLength="12.4" lengthAdjust="spacingAndGlyphs">Type</text>
<rect x="5.6" y="505.4" width="106" height="5.8" fill="#f0f0f0"/>
<rect x="10.2" y="505.9" width="89" height="4.8" fill="#dcdcdf" stroke="#b0b0b6" stroke-width="0.4" rx="1"/>
<line x1="53.0" y1="507.2" x2="53.0" y2="509.4" stroke="#8d8d95" stroke-width="0.5"/>
<line x1="54.1" y1="507.2" x2="54.1" y2="509.4" stroke="#8d8d95" stroke-width="0.5"/>
<line x1="55.2" y1="507.2" x2="55.2" y2="509.4" stroke="#8d8d95" stroke-width="0.5"/>
<path d="M8 506.8 L6.6 508.3 L8 509.8 Z" stroke="none" fill="#333" stroke-width="1" />
<path d="M109 506.8 L110.4 508.3 L109 509.8 Z" stroke="none" fill="#333" stroke-width="1" />
<path d="M121 50.2 L118.2 53.6 L121 57 M123.6 50.2 L120.8 53.6 L123.6 57" stroke="#18c030" fill="none" stroke-width="1.2" />
<text x="126.4" y="56.1" font-size="6.9" fill="#000" textLength="28.6" lengthAdjust="spacingAndGlyphs">ap-1.ms2:1</text>
<rect x="372.6" y="50.4" width="10.6" height="5.8" fill="#c6d6ea" stroke="#7486a0" stroke-width="0.6" rx="1"/>
<rect x="375.4" y="53.6" width="4.6" height="1.2" fill="#fff" stroke="#39475c" stroke-width="0.4"/>
<rect x="385.4" y="50.4" width="10.6" height="5.8" fill="#c6d6ea" stroke="#7486a0" stroke-width="0.6" rx="1"/>
<rect x="388.4" y="52" width="4.6" height="2.8" fill="#fff" stroke="#39475c" stroke-width="0.5"/>
<rect x="397.8" y="50.4" width="11.4" height="5.8" fill="#cf5a48" stroke="#7c2a20" stroke-width="0.6" rx="1"/>
<path d="M401.4 51.6 L405.6 55 M405.6 51.6 L401.4 55" stroke="#fff" fill="none" stroke-width="1.1" />
<line x1="116.5" y1="515" x2="116.5" y2="521" stroke="#d6d6da" stroke-width="0.6"/>
<line x1="240" y1="515" x2="240" y2="521" stroke="#d6d6da" stroke-width="0.6"/>
<line x1="440" y1="515" x2="440" y2="521" stroke="#d6d6da" stroke-width="0.6"/>
<line x1="494" y1="515" x2="494" y2="521" stroke="#d6d6da" stroke-width="0.6"/>
<line x1="535" y1="515" x2="535" y2="521" stroke="#d6d6da" stroke-width="0.6"/>
<line x1="578" y1="515" x2="578" y2="521" stroke="#d6d6da" stroke-width="0.6"/>
<line x1="644" y1="515" x2="644" y2="521" stroke="#d6d6da" stroke-width="0.6"/>
<text x="281.4" y="519.8" font-size="5.6" fill="#000" textLength="6.4" lengthAdjust="spacingAndGlyphs">L:0</text>
<text x="497.8" y="519.8" font-size="5.6" fill="#000" textLength="17" lengthAdjust="spacingAndGlyphs">Lat 0.5</text>
<text x="541.6" y="519.8" font-size="5.6" fill="#000" textLength="24.8" lengthAdjust="spacingAndGlyphs">Lon 134.0</text>
<text x="585.6" y="519.8" font-size="5.6" fill="#000" textLength="29.6" lengthAdjust="spacingAndGlyphs">Radius 10.3</text>
<text x="650" y="519.8" font-size="5.6" fill="#000" textLength="17.4" lengthAdjust="spacingAndGlyphs">Tilt 0.0</text>
<g transform="translate(13 25.7)"><rect x="-4.4" y="-4.2" width="8.8" height="8.4" fill="#ffffff" rx="1.5" opacity="0.75"/><path d="M-2.8 -3.6 L1.2 -3.6 L3 -1.8 L3 3.6 L-2.8 3.6 Z" stroke="#222" fill="#fff" stroke-width="0.8" stroke-linejoin="round" stroke-linecap="round"/><path d="M1.2 -3.6 L1.2 -1.8 L3 -1.8" stroke="#222" fill="none" stroke-width="0.6" stroke-linejoin="round" stroke-linecap="round"/></g>
<g transform="translate(24 25.7)"><rect x="-4.4" y="-4.2" width="8.8" height="8.4" fill="#ffffff" rx="1.5" opacity="0.75"/><path d="M-3.6 3 L-3.6 -2.4 L-1.6 -2.4 L-0.8 -1.4 L2.6 -1.4 L2.6 3 Z" stroke="#333" fill="#c8b820" stroke-width="0.7" stroke-linejoin="round" stroke-linecap="round"/><path d="M-3.6 3 L-2 0 L4 0 L2.6 3 Z" stroke="#333" fill="#f0e050" stroke-width="0.7" stroke-linejoin="round" stroke-linecap="round"/><path d="M1.6 -3.4 q1.6 -0.6 2.2 0.8 l-0.8 0.2 m0.8 -0.2 l0.4 -1" stroke="#111" fill="none" stroke-width="0.6" stroke-linejoin="round" stroke-linecap="round"/></g>
<g transform="translate(35 25.7)"><rect x="-4.4" y="-4.2" width="8.8" height="8.4" fill="#ffffff" rx="1.5" opacity="0.75"/><rect x="-3.6" y="-3.6" width="7.2" height="7.2" fill="#222" stroke="#111" stroke-width="0.5"/><rect x="-2" y="-3.6" width="4" height="2.8" fill="#f0f0f0"/><rect x="-2.4" y="0.8" width="4.8" height="2.8" fill="#b0a820"/><rect x="0.8" y="1.2" width="1.2" height="2" fill="#fff"/></g>
<g transform="translate(59 25.7)"><rect x="-4.4" y="-4.2" width="8.8" height="8.4" fill="#ffffff" rx="1.5" opacity="0.75"/><path d="M-3 -3 L0.4 0.6 M0.4 -3 L-3 0.6" stroke="#e02020" fill="none" stroke-width="1.2" stroke-linejoin="round" stroke-linecap="round"/><rect x="2.4" y="2.2" width="1.7" height="1.7" fill="#000"/></g>
<g transform="translate(70.4 25.7)"><rect x="-4.4" y="-4.2" width="8.8" height="8.4" fill="#ffffff" rx="1.5" opacity="0.75"/><path d="M-3.4 2.4 C-2.4 -2.6 -0.6 2.6 0.6 -0.2 C1.4 -2 2.4 -1.6 3 -3.2" stroke="#222" fill="none" stroke-width="1.1" stroke-linejoin="round" stroke-linecap="round"/><circle cx="0.2" cy="-0.2" r="1.1" fill="#10d020"/><rect x="2.4" y="2.2" width="1.7" height="1.7" fill="#000"/></g>
<g transform="translate(81.8 25.7)"><rect x="-4.4" y="-4.2" width="8.8" height="8.4" fill="#ffffff" rx="1.5" opacity="0.75"/><path d="M-3.6 -1.4 L-0.6 -3.4 L3.6 -1.4 L0.6 3.4 Z" stroke="#777" fill="none" stroke-width="0.8" stroke-linejoin="round" stroke-linecap="round"/><circle cx="-0.2" cy="-0.2" r="1.3" fill="#f01010"/><path d="M-2.4 -1 L0 -2.4 L2.4 -1" stroke="#30c0c0" fill="none" stroke-width="0.6" stroke-linejoin="round" stroke-linecap="round"/><rect x="2.4" y="2.2" width="1.7" height="1.7" fill="#000"/></g>
<g transform="translate(93.2 25.7)"><rect x="-4.4" y="-4.2" width="8.8" height="8.4" fill="#ffffff" rx="1.5" opacity="0.75"/><path d="M-3.6 -1.4 L-0.6 -3.4 L3.6 -1.4 L0.6 3.4 Z" stroke="#777" fill="none" stroke-width="0.8" stroke-linejoin="round" stroke-linecap="round"/><circle cx="-0.2" cy="-0.2" r="1.3" fill="#e020e0"/><path d="M-2.6 -2.6 L0.4 1" stroke="#208020" fill="none" stroke-width="0.7" stroke-linejoin="round" stroke-linecap="round"/><rect x="2.4" y="2.2" width="1.7" height="1.7" fill="#000"/></g>
<g transform="translate(104.6 25.7)"><rect x="-4.4" y="-4.2" width="8.8" height="8.4" fill="#ffffff" rx="1.5" opacity="0.75"/><path d="M-3.4 2.4 C-2.4 -2.6 -0.6 2.6 0.6 -0.2 C1.4 -2 2.4 -1.6 3 -3.2" stroke="#2030e0" fill="none" stroke-width="1.3" stroke-linejoin="round" stroke-linecap="round"/><rect x="2.4" y="2.2" width="1.7" height="1.7" fill="#000"/></g>
<g transform="translate(116 25.7)"><rect x="-4.4" y="-4.2" width="8.8" height="8.4" fill="#ffffff" rx="1.5" opacity="0.75"/><path d="M-3.6 -1.4 L-0.6 -3.4 L3.6 -1.4 L0.6 3.4 Z" stroke="#888" fill="#f4f0c0" stroke-width="0.8" stroke-linejoin="round" stroke-linecap="round"/><path d="M-2.4 -2 C0 -1.6 -1.4 0.6 0.6 1 C1.6 1.4 1 2.6 1.6 3" stroke="#2030e0" fill="none" stroke-width="1.1" stroke-linejoin="round" stroke-linecap="round"/><rect x="2.4" y="2.2" width="1.7" height="1.7" fill="#000"/></g>
<g transform="translate(127.4 25.7)"><rect x="-4.4" y="-4.2" width="8.8" height="8.4" fill="#ffffff" rx="1.5" opacity="0.75"/><path d="M-3.6 -1.4 L-0.6 -3.4 L3.6 -1.4 L0.6 3.4 Z" stroke="#2030e0" fill="#40e0e8" stroke-width="0.8" stroke-linejoin="round" stroke-linecap="round"/><path d="M-1.6 -2.4 L1 2.6 M1.4 -2.6 L0.8 3" stroke="#2030e0" fill="none" stroke-width="0.7" stroke-linejoin="round" stroke-linecap="round"/><path d="M-2.8 -0.6 L2.6 0.2" stroke="#e04040" fill="none" stroke-width="0.5" stroke-linejoin="round" stroke-linecap="round"/><rect x="2.4" y="2.2" width="1.7" height="1.7" fill="#000"/></g>
<g transform="translate(138.8 25.7)"><rect x="-4.4" y="-4.2" width="8.8" height="8.4" fill="#ffffff" rx="1.5" opacity="0.75"/><path d="M-3.6 -1.4 L-0.6 -3.4 L3.6 -1.4 L0.6 3.4 Z" stroke="#2030e0" fill="#fafafa" stroke-width="1.1" stroke-linejoin="round" stroke-linecap="round"/><path d="M-0.6 -3 L0.4 2.8" stroke="#999" fill="none" stroke-width="0.5" stroke-linejoin="round" stroke-linecap="round"/><rect x="2.4" y="2.2" width="1.7" height="1.7" fill="#000"/></g>
<g transform="translate(150.2 25.7)"><rect x="-4.4" y="-4.2" width="8.8" height="8.4" fill="#ffffff" rx="1.5" opacity="0.75"/><rect x="-3.2" y="-3.2" width="6.4" height="6.4" fill="#f0e000" stroke="#333" stroke-width="0.8"/><path d="M-3.2 -3.2 L3.2 3.2 M3.2 -3.2 L-3.2 3.2" stroke="#333" fill="none" stroke-width="0.6" stroke-linejoin="round" stroke-linecap="round"/><rect x="-1.3" y="-1.3" width="2.6" height="2.6" fill="#fff" stroke="#333" stroke-width="0.5"/><rect x="2.4" y="2.2" width="1.7" height="1.7" fill="#000"/></g>
<g transform="translate(161.6 25.7)"><rect x="-4.4" y="-4.2" width="8.8" height="8.4" fill="#ffffff" rx="1.5" opacity="0.75"/><rect x="-3.2" y="-3.2" width="6.4" height="6.4" fill="#f0e000" stroke="#222" stroke-width="1.0"/><rect x="-1.2" y="-1.2" width="2.4" height="2.4" fill="#c0c0c0"/><rect x="2.4" y="2.2" width="1.7" height="1.7" fill="#000"/></g>
<g transform="translate(173.4 25.7)"><rect x="-4.4" y="-4.2" width="8.8" height="8.4" fill="#ffffff" rx="1.5" opacity="0.75"/><path d="M-3.6 -0.8 L-1.4 -3.2 L3.4 -3.2 L3.4 1 L1.2 3.2 L-3.6 3.2 Z" stroke="#106070" fill="#20d0d8" stroke-width="0.7" stroke-linejoin="round" stroke-linecap="round"/><rect x="-1.2" y="-1.4" width="2.6" height="2.6" fill="#40e8f0" stroke="#e05050" stroke-width="0.4"/><rect x="2.4" y="2.2" width="1.7" height="1.7" fill="#000"/></g>
<g transform="translate(185 25.7)"><rect x="-4.4" y="-4.2" width="8.8" height="8.4" fill="#ffffff" rx="1.5" opacity="0.75"/><path d="M-3.4 -1 L-1.4 -3 L1 -2 L3.4 -3 L3.2 2 L0.6 3.4 L-3 2.6 Z" stroke="#2030e0" fill="#f4d0d0" stroke-width="0.9" stroke-linejoin="round" stroke-linecap="round"/><path d="M-1.4 -1 L1.4 -1.4 L1.2 1.6 L-1.2 1.4 Z" stroke="#e02020" fill="#ffd040" stroke-width="0.7" stroke-linejoin="round" stroke-linecap="round"/><rect x="2.4" y="2.2" width="1.7" height="1.7" fill="#000"/></g>
<line x1="192.5" y1="21.2" x2="192.5" y2="30.2" stroke="#a0a0a8" stroke-width="0.7"/>
<g transform="translate(200 25.7)"><rect x="-4.4" y="-4.2" width="8.8" height="8.4" fill="#ffffff" rx="1.5" opacity="0.75"/><path d="M-3.4 -0.4 L0 -3.6 L3.4 -0.2 L0 3.2 Z" stroke="#106020" fill="#30c040" stroke-width="0.8" stroke-linejoin="round" stroke-linecap="round"/><rect x="-1" y="-1.2" width="2" height="2" fill="#f0f0f0"/><rect x="2.4" y="2.2" width="1.7" height="1.7" fill="#000"/></g>
<g transform="translate(212 25.7)"><rect x="-4.4" y="-4.2" width="8.8" height="8.4" fill="#ffffff" rx="1.5" opacity="0.75"/><path d="M-2.6 -2.6 L0.6 0.8 M0.8 -1.6 L0.8 1 L-1.8 1" stroke="#111" fill="none" stroke-width="1.0" stroke-linejoin="round" stroke-linecap="round"/><rect x="2.4" y="2.2" width="1.7" height="1.7" fill="#000"/></g>
<rect x="228.5" y="21.1" width="10.699999999999989" height="9.6" fill="#f4f4f6" stroke="#5c5c60" stroke-width="0.9" rx="1.6"/>
<rect x="241" y="21.1" width="10.300000000000011" height="9.6" fill="#f4f4f6" stroke="#5c5c60" stroke-width="0.9" rx="1.6"/>
<rect x="252.6" y="21.1" width="10.000000000000028" height="9.6" fill="#f4f4f6" stroke="#5c5c60" stroke-width="0.9" rx="1.6"/>
<g transform="translate(233.8 25.9)"><rect x="-3.8" y="-3.2" width="7.6" height="6.4" fill="#f4f4f4" stroke="#222" stroke-width="0.8"/><rect x="-3.8" y="-3.2" width="7.6" height="1.8" fill="#1a2aa0"/><path d="M-2 0.6 L1.6 0.6 M-2 1.8 L0.4 1.8" stroke="#333" fill="none" stroke-width="0.5" stroke-linejoin="round" stroke-linecap="round"/></g>
<g transform="translate(246.2 25.9)"><rect x="-3.8" y="-3.2" width="7.6" height="6.4" fill="#f4f4f4" stroke="#222" stroke-width="0.8"/><rect x="-3.8" y="-3.2" width="7.6" height="1.8" fill="#1a2aa0"/><path d="M-1.3 -1.4 L-1.3 3.2 M1.3 -1.4 L1.3 3.2" stroke="#333" fill="none" stroke-width="0.6" stroke-linejoin="round" stroke-linecap="round"/></g>
<g transform="translate(257.6 25.9)"><rect x="-3.8" y="-3.2" width="7.6" height="6.4" fill="#f4f4f4" stroke="#222" stroke-width="0.8"/><rect x="-3.8" y="-3.2" width="7.6" height="1.8" fill="#303040"/><rect x="-3.8" y="-1.4" width="7.6" height="4.6" fill="#909094"/><path d="M-1.8 -3.4 L-1.8 2.6 L-0.3 1.3 L0.9 3.6 L1.9 3.1 L0.8 0.9 L2.7 0.8 Z" stroke="#10c8d8" fill="#20e0f0" stroke-width="0.8" stroke-linejoin="round" stroke-linecap="round"/></g>
<g transform="translate(268.6 25.9)"><rect x="-3.8" y="-3.2" width="7.6" height="6.4" fill="#f4f4f4" stroke="#222" stroke-width="0.8"/><rect x="-3.8" y="-3.2" width="7.6" height="1.8" fill="#1a2aa0"/><rect x="-3.8" y="-1.4" width="7.6" height="4.6" fill="#808088"/><path d="M-1 -1 L3 -1 L3 3 M3 -1 L-0.6 2.6" stroke="#20e0f0" fill="none" stroke-width="1.2" stroke-linejoin="round" stroke-linecap="round"/></g>
<g transform="translate(280 25.9)"><rect x="-3.8" y="-3.2" width="7.6" height="6.4" fill="#f4f4f4" stroke="#222" stroke-width="0.8"/><rect x="-3.8" y="-3.2" width="7.6" height="1.8" fill="#1a2aa0"/><path d="M-1.8 -0.8 L1.8 -0.8 L1.8 1.6 L0 3 L-1.8 1.6 Z" stroke="#a00000" fill="#f01010" stroke-width="0.5" stroke-linejoin="round" stroke-linecap="round"/><circle cx="0" cy="0.8" r="0.7" fill="#fff"/></g>
<g transform="translate(302 25.7)"><path d="M-3 -2.6 L3 2.6 M3 -2.6 L-3 2.6" stroke="#a0a0a4" fill="none" stroke-width="1.2" stroke-linejoin="round" stroke-linecap="round"/><rect x="-2" y="-1.4" width="4" height="2.8" fill="#b8b8bc"/></g>
<g transform="translate(313.6 25.7)"><rect x="-3.8" y="-3.6" width="2.6" height="7.2" fill="#20d0d8" stroke="#10a0a8" stroke-width="0.4"/><path d="M0 -1.6 L0 2.4 L1 1.6 L2 3.6 L2.8 3.2 L1.8 1.2 L3 1 Z" stroke="#000" fill="#fff" stroke-width="0.6" stroke-linejoin="round" stroke-linecap="round"/></g>
<g transform="translate(325 25.7)"><rect x="-3.4" y="-3.2" width="2.4" height="6" fill="#c4c4c8" stroke="#a0a0a4" stroke-width="0.4"/><rect x="-0.4" y="-2" width="1.8" height="4.6" fill="#c4c4c8" stroke="#a0a0a4" stroke-width="0.4"/><path d="M1.4 0.6 L3.2 3 " stroke="#a0a0a4" fill="none" stroke-width="1.0" stroke-linejoin="round" stroke-linecap="round"/></g>
<g transform="translate(336.5 25.7)"><rect x="-3.4" y="-3.2" width="2.4" height="6" fill="#c4c4c8" stroke="#a0a0a4" stroke-width="0.4"/><rect x="-0.4" y="-2" width="1.8" height="4.6" fill="#c4c4c8" stroke="#a0a0a4" stroke-width="0.4"/><path d="M1.4 0.6 L3.2 3 " stroke="#a0a0a4" fill="none" stroke-width="1.0" stroke-linejoin="round" stroke-linecap="round"/></g>
<g transform="translate(348 25.7)"><rect x="-3.8" y="-3.2" width="6.4" height="4.8" fill="#f4f4f4" stroke="#111" stroke-width="0.9"/><path d="M-2.4 -1.6 L-0.4 -1.6 M0.6 -1.2 L1.8 0.2" stroke="#111" fill="none" stroke-width="0.8" stroke-linejoin="round" stroke-linecap="round"/><path d="M1 0 q2.6 0.2 1.6 2 q-0.6 1 0.4 1.6" stroke="#111" fill="none" stroke-width="1.0" stroke-linejoin="round" stroke-linecap="round"/></g>
<rect x="364" y="21.1" width="11.300000000000011" height="9.6" fill="#f4f4f6" stroke="#5c5c60" stroke-width="0.9" rx="1.6"/>
<g transform="translate(369.6 25.7)"><path d="M-1.8 -3.4 L-1.8 2.6 L-0.3 1.3 L0.9 3.6 L1.9 3.1 L0.8 0.9 L2.7 0.8 Z" stroke="#000" fill="#fff" stroke-width="0.8" stroke-linejoin="round" stroke-linecap="round"/></g>
<g transform="translate(381.7 25.7)"><rect x="-2.6" y="-1.6" width="0.9" height="0.9" fill="#909094"/><rect x="-2.6" y="0.6000000000000001" width="0.9" height="0.9" fill="#909094"/><rect x="-2.6" y="2.8000000000000003" width="0.9" height="0.9" fill="#909094"/><rect x="-0.3999999999999999" y="-1.6" width="0.9" height="0.9" fill="#909094"/><rect x="-0.3999999999999999" y="0.6000000000000001" width="0.9" height="0.9" fill="#909094"/><rect x="-0.3999999999999999" y="2.8000000000000003" width="0.9" height="0.9" fill="#909094"/><rect x="1.8000000000000003" y="-1.6" width="0.9" height="0.9" fill="#909094"/><rect x="1.8000000000000003" y="0.6000000000000001" width="0.9" height="0.9" fill="#909094"/><rect x="1.8000000000000003" y="2.8000000000000003" width="0.9" height="0.9" fill="#909094"/><rect x="-2.9" y="-1.9" width="1.5" height="1.5" fill="#f0e000"/><path d="M-3.6 -1.2 L-0.4 -1.2 M-2.2 -3 L-2.2 0.8" stroke="#f0e000" fill="none" stroke-width="0.7" stroke-linejoin="round" stroke-linecap="round"/></g>
<g transform="translate(393 25.7)"><rect x="-2.6" y="-1.6" width="0.9" height="0.9" fill="#909094"/><rect x="-2.6" y="0.6000000000000001" width="0.9" height="0.9" fill="#909094"/><rect x="-2.6" y="2.8000000000000003" width="0.9" height="0.9" fill="#909094"/><rect x="-0.3999999999999999" y="-1.6" width="0.9" height="0.9" fill="#909094"/><rect x="-0.3999999999999999" y="0.6000000000000001" width="0.9" height="0.9" fill="#909094"/><rect x="-0.3999999999999999" y="2.8000000000000003" width="0.9" height="0.9" fill="#909094"/><rect x="1.8000000000000003" y="-1.6" width="0.9" height="0.9" fill="#909094"/><rect x="1.8000000000000003" y="0.6000000000000001" width="0.9" height="0.9" fill="#909094"/><rect x="1.8000000000000003" y="2.8000000000000003" width="0.9" height="0.9" fill="#909094"/><path d="M-3.4 -2.4 L0 -2.4" stroke="#f0e000" fill="none" stroke-width="1.1" stroke-linejoin="round" stroke-linecap="round"/></g>
<g transform="translate(404.7 25.7)"><rect x="-2.6" y="-1.6" width="0.9" height="0.9" fill="#909094"/><rect x="-2.6" y="0.6000000000000001" width="0.9" height="0.9" fill="#909094"/><rect x="-2.6" y="2.8000000000000003" width="0.9" height="0.9" fill="#909094"/><rect x="-0.3999999999999999" y="-1.6" width="0.9" height="0.9" fill="#909094"/><rect x="-0.3999999999999999" y="0.6000000000000001" width="0.9" height="0.9" fill="#909094"/><rect x="-0.3999999999999999" y="2.8000000000000003" width="0.9" height="0.9" fill="#909094"/><rect x="1.8000000000000003" y="-1.6" width="0.9" height="0.9" fill="#909094"/><rect x="1.8000000000000003" y="0.6000000000000001" width="0.9" height="0.9" fill="#909094"/><rect x="1.8000000000000003" y="2.8000000000000003" width="0.9" height="0.9" fill="#909094"/><path d="M-3.6 -1 L1.6 -1 M-1.4 -3.4 L-1.4 1.8" stroke="#f0e000" fill="none" stroke-width="0.9" stroke-linejoin="round" stroke-linecap="round"/><circle cx="-1.4" cy="-2.6" r="0.9" fill="#e02020"/><path d="M1.6 -1.6 L1.6 2.6 L2.4 2 L3 3.4" stroke="#222" fill="none" stroke-width="0.9" stroke-linejoin="round" stroke-linecap="round"/></g>
<g transform="translate(426.4 25.7)"><rect x="-3.2" y="-3.2" width="6.4" height="6.4" fill="#c8c8cc"/><path d="M-3.2 -1.6 L3.2 -1.6 M-3.2 0 L3.2 0 M-3.2 1.6 L3.2 1.6" stroke="#a4a4a8" fill="none" stroke-width="0.5" stroke-linejoin="round" stroke-linecap="round"/></g>
<g transform="translate(438.4 25.7)"><path d="M-3.4 -3.4 L-1 -1 M-1 -3.4 L-3.4 -1" stroke="#e02020" fill="none" stroke-width="0.9" stroke-linejoin="round" stroke-linecap="round"/><path d="M-2.6 -0.2 C-2 2.4 0 2 2 2.4" stroke="#e02020" fill="none" stroke-width="0.9" stroke-linejoin="round" stroke-linecap="round"/><circle cx="3" cy="2.6" r="1.4" fill="#f01010"/></g>
<rect x="444" y="21.1" width="11.300000000000011" height="9.6" fill="#f4f4f6" stroke="#5c5c60" stroke-width="0.9" rx="1.6"/>
<g transform="translate(449.6 25.7)"><path d="M-3.4 2.4 C-2.4 -2.6 -0.6 2.6 0.6 -0.2 C1.4 -2 2.4 -1.6 3 -3.2" stroke="#2030e0" fill="none" stroke-width="1.2" stroke-linejoin="round" stroke-linecap="round"/><circle cx="3" cy="2.6" r="1.4" fill="#f01010"/></g>
<g transform="translate(461.3 25.7)"><path d="M-3.2 -2 C-1 -4 2.6 -3.6 3.4 -1 L0.4 2.6 Z" stroke="#2030e0" fill="#f4f4ff" stroke-width="0.9" stroke-linejoin="round" stroke-linecap="round"/><path d="M-1.8 -1.4 L1.4 -1" stroke="#999" fill="none" stroke-width="0.5" stroke-linejoin="round" stroke-linecap="round"/><circle cx="3" cy="2.6" r="1.4" fill="#f01010"/></g>
<g transform="translate(472.6 25.7)"><rect x="-3.2" y="-3.2" width="6.4" height="6.4" fill="#f0e000" stroke="#333" stroke-width="0.8"/><path d="M-3.2 -3.2 L3.2 3.2 M3.2 -3.2 L-3.2 3.2" stroke="#333" fill="none" stroke-width="0.6" stroke-linejoin="round" stroke-linecap="round"/><rect x="-1.3" y="-1.3" width="2.6" height="2.6" fill="#fff" stroke="#333" stroke-width="0.5"/><circle cx="3" cy="2.6" r="1.4" fill="#f01010"/></g>
<g transform="translate(484 25.7)"><rect x="-3.4" y="-3.2" width="6.8" height="6.4" fill="#f0e000" stroke="#18186a" stroke-width="1.2"/><rect x="-1.2" y="-1.2" width="2.4" height="2.4" fill="#18186a"/><circle cx="3" cy="2.6" r="1.4" fill="#f01010"/></g>
<g transform="translate(495.4 25.7)"><path d="M-3.6 -3.4 L-1.6 -1.4" stroke="#b01010" fill="none" stroke-width="0.9" stroke-linejoin="round" stroke-linecap="round"/><path d="M-3.2 -0.6 L-0.4 -3.4 L3 -0.2 L0.2 2.8 Z" stroke="#106020" fill="#30c040" stroke-width="0.8" stroke-linejoin="round" stroke-linecap="round"/><rect x="-1" y="-1.2" width="1.8" height="1.8" fill="#f0f0f0"/><circle cx="3" cy="2.6" r="1.4" fill="#f01010"/></g>
<g transform="translate(506.7 25.7)"><rect x="-2.8" y="-2.2" width="4.6" height="5" fill="none" stroke="#a0a0a4" stroke-width="0.7"/><path d="M-2.8 -2.2 L-1 -3.6 L3.4 -3.6 L3.4 1.6 L1.8 2.8 M1.8 -2.2 L3.4 -3.6 M-0.4 -2.2 L-0.4 2.8 M-2.8 0.4 L1.8 0.4" stroke="#a0a0a4" fill="none" stroke-width="0.6" stroke-linejoin="round" stroke-linecap="round"/></g>
<g transform="translate(529 25.7)"><path d="M-3.4 2.4 L1 -3 L2.4 2.4 Z M1 -3 L3.4 1.2" stroke="#a0a0a4" fill="#d0d0d4" stroke-width="0.8" stroke-linejoin="round" stroke-linecap="round"/></g>
<g transform="translate(540.4 25.7)"><path d="M-4 0 L4 0 M-2.4 -1.6 L-0.8 0 L-2.4 1.6 M2.4 -1.6 L0.8 0 L2.4 1.6 M-0.6 -1.6 L0.6 1.6" stroke="#a0a0a4" fill="none" stroke-width="0.9" stroke-linejoin="round" stroke-linecap="round"/></g>
<g transform="translate(552 25.7)"><circle cx="-2.8" cy="0" r="1.1" fill="#e02020"/><circle cx="0" cy="0" r="1.1" fill="#f0e000"/><circle cx="2.8" cy="0" r="1.1" fill="#e02020"/><path d="M-1.8 0 L-1 0 M1 0 L1.8 0" stroke="#e0a000" fill="none" stroke-width="0.8" stroke-linejoin="round" stroke-linecap="round"/></g>
<line x1="559.2" y1="21.2" x2="559.2" y2="30.2" stroke="#a0a0a8" stroke-width="0.7"/>
<g transform="translate(567 25.7)"><rect x="-3" y="-3" width="2.6" height="2.2" fill="#d0d0d4" stroke="#a8a8ac" stroke-width="0.5"/><rect x="0.6" y="-0.8" width="2.6" height="2.2" fill="#d0d0d4" stroke="#a8a8ac" stroke-width="0.5"/><rect x="0.6" y="1.8" width="2.6" height="1.6" fill="#d0d0d4" stroke="#a8a8ac" stroke-width="0.5"/><path d="M-1.6 -0.8 L-1.6 2.6 L0.6 2.6 M-1.6 0.4 L0.6 0.4" stroke="#a8a8ac" fill="none" stroke-width="0.5" stroke-linejoin="round" stroke-linecap="round"/></g>
<rect x="597" y="21.1" width="10.799999999999955" height="9.6" fill="#f4f4f6" stroke="#5c5c60" stroke-width="0.9" rx="1.6"/>
<g transform="translate(602.6 25.7)"><path d="M-1.8 -3.4 L-1.8 2.6 L-0.3 1.3 L0.9 3.6 L1.9 3.1 L0.8 0.9 L2.7 0.8 Z" stroke="#000" fill="#fff" stroke-width="0.8" stroke-linejoin="round" stroke-linecap="round"/></g>
<g transform="translate(613.8 25.7)"><path d="M-3.8 -3.6 L-1.6 -1.4 M-1.6 -3.6 L-3.8 -1.4" stroke="#e02020" fill="none" stroke-width="0.8" stroke-linejoin="round" stroke-linecap="round"/><path d="M-1 -1.4 L3 2.2 L2 3.4 L-2.2 0 Z" stroke="#222" fill="#20a0a8" stroke-width="0.7" stroke-linejoin="round" stroke-linecap="round"/><circle cx="2.6" cy="2.8" r="1.1" fill="#20c0c8" stroke="#222" stroke-width="0.5"/></g>
<g transform="translate(625.8 25.7)"><path d="M-3.8 -1.6 C-3 -4.4 -1.6 -0.6 -0.6 -3.6 M-1 -1.6 C-0.4 -3.6 0.6 -2 1.2 -3.8" stroke="#2030e0" fill="none" stroke-width="0.9" stroke-linejoin="round" stroke-linecap="round"/><path d="M-1 -1.4 L3 2.2 L2 3.4 L-2.2 0 Z" stroke="#222" fill="#20a0a8" stroke-width="0.7" stroke-linejoin="round" stroke-linecap="round"/><circle cx="2.6" cy="2.8" r="1.1" fill="#20c0c8" stroke="#222" stroke-width="0.5"/></g>
<g transform="translate(12 40.7)"><path d="M-3.4 -3.6 L-3.4 -0.6 M-4 -3 L-3.4 -3.6" stroke="#111" fill="none" stroke-width="0.8" stroke-linejoin="round" stroke-linecap="round"/><path d="M0.6 -3.8 L-3.6 2.6" stroke="#111" fill="none" stroke-width="0.8" stroke-linejoin="round" stroke-linecap="round"/><path d="M-0.4 0.2 L3.8 0.2 L2 2.2 L2 3.8 L1.4 3.8 L1.4 2.2 Z" stroke="#000" fill="#20a0e0" stroke-width="0.9" stroke-linejoin="round" stroke-linecap="round"/></g>
<rect x="18.9" y="36.1" width="10.9" height="10" fill="#f4f4f6" stroke="#5c5c60" stroke-width="0.9" rx="1.7"/>
<g transform="translate(24.099999999999998 41.300000000000004)"><path d="M-3.2 0.4 L-0.8 2.8 M-0.8 0.4 L-3.2 2.8" stroke="#e02020" fill="none" stroke-width="0.9" stroke-linejoin="round" stroke-linecap="round"/><rect x="-0.4" y="0.2" width="3" height="2.8" fill="#e8e8ec"/><path d="M0.4 -3.8 L4.2 -3.8 L2.6 -1.8 L2.6 0 L2 0 L2 -1.8 Z" stroke="#000" fill="#20a0e0" stroke-width="0.9" stroke-linejoin="round" stroke-linecap="round"/></g>
<rect x="30.349999999999998" y="36.1" width="10.9" height="10" fill="#f4f4f6" stroke="#5c5c60" stroke-width="0.9" rx="1.7"/>
<g transform="translate(35.55 41.300000000000004)"><path d="M-3.4 2.8 C-2.4 -1.4 -0.8 3 0.4 0.4 C1.2 -1 2.4 0.8 3.4 -0.6" stroke="#2030e0" fill="none" stroke-width="1.2" stroke-linejoin="round" stroke-linecap="round"/><path d="M0.4 -3.8 L4.2 -3.8 L2.6 -1.8 L2.6 0 L2 0 L2 -1.8 Z" stroke="#000" fill="#20a0e0" stroke-width="0.9" stroke-linejoin="round" stroke-linecap="round"/></g>
<rect x="41.8" y="36.1" width="10.9" height="10" fill="#f4f4f6" stroke="#5c5c60" stroke-width="0.9" rx="1.7"/>
<g transform="translate(47.0 41.300000000000004)"><path d="M-2.6 -2.6 C-0.6 -2 -2.6 0.4 -0.6 1 C0.6 1.4 0 2.6 0.6 3.2" stroke="#2030e0" fill="none" stroke-width="1.2" stroke-linejoin="round" stroke-linecap="round"/><path d="M-3.2 -1 L-1.6 -3 M0.6 -2.6 L-0.4 3" stroke="#b0b080" fill="none" stroke-width="0.5" stroke-linejoin="round" stroke-linecap="round"/><path d="M0.4 -3.8 L4.2 -3.8 L2.6 -1.8 L2.6 0 L2 0 L2 -1.8 Z" stroke="#000" fill="#20a0e0" stroke-width="0.9" stroke-linejoin="round" stroke-linecap="round"/></g>
<rect x="53.24999999999999" y="36.1" width="10.9" height="10" fill="#f4f4f6" stroke="#5c5c60" stroke-width="0.9" rx="1.7"/>
<g transform="translate(58.449999999999996 41.300000000000004)"><path d="M-3 -1.6 C-2 -3.4 1 -3.4 1.6 -1.4 L-0.6 3.2 Z" stroke="#2030e0" fill="#fafaff" stroke-width="1.0" stroke-linejoin="round" stroke-linecap="round"/><path d="M-1.4 -1.6 L-0.4 1.8" stroke="#999" fill="none" stroke-width="0.5" stroke-linejoin="round" stroke-linecap="round"/><path d="M0.4 -3.8 L4.2 -3.8 L2.6 -1.8 L2.6 0 L2 0 L2 -1.8 Z" stroke="#000" fill="#20a0e0" stroke-width="0.9" stroke-linejoin="round" stroke-linecap="round"/></g>
<rect x="64.69999999999999" y="36.1" width="10.9" height="10" fill="#f4f4f6" stroke="#5c5c60" stroke-width="0.9" rx="1.7"/>
<g transform="translate(69.89999999999999 41.300000000000004)"><rect x="-3" y="-0.6" width="4" height="3.8" fill="#f4f4ff" stroke="#2030e0" stroke-width="1.0"/><path d="M-3 -0.6 L-1.4 -2.2 L2.6 -2.2 L2.6 1.6 L1 3.2 M1 -0.6 L2.6 -2.2" stroke="#2030e0" fill="none" stroke-width="1.0" stroke-linejoin="round" stroke-linecap="round"/><path d="M0.4 -3.8 L4.2 -3.8 L2.6 -1.8 L2.6 0 L2 0 L2 -1.8 Z" stroke="#000" fill="#20a0e0" stroke-width="0.9" stroke-linejoin="round" stroke-linecap="round"/></g>
<rect x="76.15" y="36.1" width="10.9" height="10" fill="#f4f4f6" stroke="#5c5c60" stroke-width="0.9" rx="1.7"/>
<g transform="translate(81.35000000000001 41.300000000000004)"><rect x="-3.2" y="-2.6" width="6.4" height="5.8" fill="#f0e000" stroke="#333" stroke-width="0.8"/><path d="M-3.2 -2.6 L3.2 3.2 M3.2 -2.6 L-3.2 3.2" stroke="#333" fill="none" stroke-width="0.6" stroke-linejoin="round" stroke-linecap="round"/><rect x="-1.2" y="-0.9" width="2.4" height="2.4" fill="#fff" stroke="#333" stroke-width="0.5"/><path d="M0.4 -3.8 L4.2 -3.8 L2.6 -1.8 L2.6 0 L2 0 L2 -1.8 Z" stroke="#000" fill="#20a0e0" stroke-width="0.9" stroke-linejoin="round" stroke-linecap="round"/></g>
<rect x="87.6" y="36.1" width="10.9" height="10" fill="#f4f4f6" stroke="#5c5c60" stroke-width="0.9" rx="1.7"/>
<g transform="translate(92.8 41.300000000000004)"><rect x="-3.2" y="-2.6" width="6.4" height="5.8" fill="#f0e000" stroke="#18186a" stroke-width="1.1"/><rect x="-1.2" y="-0.9" width="2.4" height="2.4" fill="#18186a"/><path d="M0.4 -3.8 L4.2 -3.8 L2.6 -1.8 L2.6 0 L2 0 L2 -1.8 Z" stroke="#000" fill="#20a0e0" stroke-width="0.9" stroke-linejoin="round" stroke-linecap="round"/></g>
<rect x="99.04999999999998" y="36.1" width="10.9" height="10" fill="#f4f4f6" stroke="#5c5c60" stroke-width="0.9" rx="1.7"/>
<g transform="translate(104.24999999999999 41.300000000000004)"><path d="M-3.4 0.4 L-0.4 -2.6 L3 0.6 L0 3.4 Z" stroke="#106020" fill="#30c040" stroke-width="0.8" stroke-linejoin="round" stroke-linecap="round"/><rect x="-1" y="-0.4" width="1.8" height="1.8" fill="#f0f0f0"/><path d="M0.4 -3.8 L4.2 -3.8 L2.6 -1.8 L2.6 0 L2 0 L2 -1.8 Z" stroke="#000" fill="#20a0e0" stroke-width="0.9" stroke-linejoin="round" stroke-linecap="round"/></g>
<rect x="110.5" y="36.1" width="10.9" height="10" fill="#f4f4f6" stroke="#5c5c60" stroke-width="0.9" rx="1.7"/>
<g transform="translate(115.7 41.300000000000004)"><path d="M-2.6 -2.8 L-2.6 2.6 L2.8 2.6 M-2.6 2.6 L0.2 -0.2" stroke="#2030e0" fill="none" stroke-width="1.0" stroke-linejoin="round" stroke-linecap="round"/><path d="M-1 1.4 L1.6 1.4" stroke="#888" fill="none" stroke-width="0.5" stroke-linejoin="round" stroke-linecap="round"/><path d="M0.4 -3.8 L4.2 -3.8 L2.6 -1.8 L2.6 0 L2 0 L2 -1.8 Z" stroke="#000" fill="#20a0e0" stroke-width="0.9" stroke-linejoin="round" stroke-linecap="round"/></g>
<rect x="121.94999999999999" y="36.1" width="10.9" height="10" fill="#f4f4f6" stroke="#5c5c60" stroke-width="0.9" rx="1.7"/>
<g transform="translate(127.14999999999999 41.300000000000004)"><rect x="-3" y="-0.4" width="6" height="1.4" fill="#e8e8ec" stroke="#999" stroke-width="0.4"/><rect x="-2.6" y="1.4" width="5.2" height="1.8" fill="#2030e0"/><path d="M-1.8 2.3 L1.8 2.3" stroke="#fff" fill="none" stroke-width="0.5" stroke-linejoin="round" stroke-linecap="round"/><path d="M-0.6 -3.8 L3.2 -3.8 L1.6 -1.8 L1.6 -0.4 L1 -0.4 L1 -1.8 Z" stroke="#000" fill="#20a0e0" stroke-width="0.9" stroke-linejoin="round" stroke-linecap="round"/></g>
<rect x="133.4" y="36.1" width="10.9" height="10" fill="#f4f4f6" stroke="#5c5c60" stroke-width="0.9" rx="1.7"/>
<g transform="translate(138.6 41.300000000000004)"><path d="M-3.4 2.2 L-1.6 -0.2 L0.2 -1 L2.2 -1.6" stroke="#2030e0" fill="none" stroke-width="1.0" stroke-linejoin="round" stroke-linecap="round"/><rect x="-0.2" y="0" width="3.2" height="2.6" fill="#e8e8ec"/><path d="M0.4 -3.8 L4.2 -3.8 L2.6 -1.8 L2.6 0 L2 0 L2 -1.8 Z" stroke="#000" fill="#20a0e0" stroke-width="0.9" stroke-linejoin="round" stroke-linecap="round"/></g>
<rect x="144.85" y="36.1" width="10.9" height="10" fill="#f4f4f6" stroke="#5c5c60" stroke-width="0.9" rx="1.7"/>
<g transform="translate(150.04999999999998 41.300000000000004)"><path d="M-3.2 3 L-1 0.4 L1 -0.8 L3 -2.6" stroke="#2030e0" fill="none" stroke-width="1.0" stroke-linejoin="round" stroke-linecap="round"/><circle cx="-1" cy="0.4" r="0.6" fill="#2030e0"/><circle cx="1" cy="-0.8" r="0.6" fill="#2030e0"/><path d="M0.4 -3.8 L4.2 -3.8 L2.6 -1.8 L2.6 0 L2 0 L2 -1.8 Z" stroke="#000" fill="#20a0e0" stroke-width="0.9" stroke-linejoin="round" stroke-linecap="round"/></g>
<rect x="156.29999999999998" y="36.1" width="10.9" height="10" fill="#f4f4f6" stroke="#5c5c60" stroke-width="0.9" rx="1.7"/>
<g transform="translate(161.49999999999997 41.300000000000004)"><rect x="-3.2" y="-2.4" width="5" height="4.6" fill="#f0f0f0" stroke="#222" stroke-width="0.9"/><path d="M-0.4 3 L2.8 -1.8" stroke="#e020e0" fill="none" stroke-width="1.4" stroke-linejoin="round" stroke-linecap="round"/><path d="M-2 2.8 L2.8 2.8" stroke="#2030e0" fill="none" stroke-width="0.8" stroke-linejoin="round" stroke-linecap="round"/><path d="M0.4 -3.8 L4.2 -3.8 L2.6 -1.8 L2.6 0 L2 0 L2 -1.8 Z" stroke="#000" fill="#20a0e0" stroke-width="0.9" stroke-linejoin="round" stroke-linecap="round"/></g>
<rect x="167.75" y="36.1" width="10.9" height="10" fill="#f4f4f6" stroke="#5c5c60" stroke-width="0.9" rx="1.7"/>
<g transform="translate(172.95 41.300000000000004)"><path d="M-3 -0.4 L-1.4 -2.4 L2 -2 L2.4 1.6 L-1 3 L-3 1.8 Z" stroke="#2030e0" fill="#ffd8d0" stroke-width="0.9" stroke-linejoin="round" stroke-linecap="round"/><path d="M-1.4 -0.4 L1 -0.6 L1 1.4 L-1.2 1.4 Z" stroke="#e02020" fill="#ffd040" stroke-width="0.6" stroke-linejoin="round" stroke-linecap="round"/><path d="M0.4 -3.8 L4.2 -3.8 L2.6 -1.8 L2.6 0 L2 0 L2 -1.8 Z" stroke="#000" fill="#20a0e0" stroke-width="0.9" stroke-linejoin="round" stroke-linecap="round"/></g>
<rect x="179.2" y="36.1" width="10.9" height="10" fill="#f4f4f6" stroke="#5c5c60" stroke-width="0.9" rx="1.7"/>
<g transform="translate(184.39999999999998 41.300000000000004)"><path d="M-3.2 -0.6 L-1.2 -2.6 L1.2 -1.6 L3.2 -2.6 L3 2 L0.4 3.2 L-3 2.4 Z" stroke="#2030e0" fill="#f4d0d0" stroke-width="0.9" stroke-linejoin="round" stroke-linecap="round"/><path d="M-1.2 -0.6 L1.4 -1 L1.2 1.8 L-1 1.6 Z" stroke="#e02020" fill="#ffd040" stroke-width="0.7" stroke-linejoin="round" stroke-linecap="round"/><path d="M0.4 -3.8 L4.2 -3.8 L2.6 -1.8 L2.6 0 L2 0 L2 -1.8 Z" stroke="#000" fill="#20a0e0" stroke-width="0.9" stroke-linejoin="round" stroke-linecap="round"/></g>
<g transform="translate(197 41.1)"><path d="M-3.6 1 L-1.6 -0.6 L2.6 -0.6 L0.8 1 Z" stroke="#111" fill="#30c040" stroke-width="0.7" stroke-linejoin="round" stroke-linecap="round"/><path d="M-3.6 3 L-1.6 1.6 L2.6 1.6 L0.8 3 Z" stroke="#111" fill="#30c040" stroke-width="0.7" stroke-linejoin="round" stroke-linecap="round"/><path d="M0.4 -3.8 L4.2 -3.8 L2.6 -1.8 L2.6 0 L2 0 L2 -1.8 Z" stroke="#000" fill="#20a0e0" stroke-width="0.9" stroke-linejoin="round" stroke-linecap="round"/></g>
<g transform="translate(218.5 40.7)"><path d="M-3.2 -3 L-3.2 0 L-1.6 2 L-1.6 3.4 L1.6 3.4 L1.6 2 L3.2 0 L3.2 -3 Z" stroke="#b0b0b4" fill="#d0d0d4" stroke-width="0.6" stroke-linejoin="round" stroke-linecap="round"/><circle cx="0" cy="-0.6" r="2.2" fill="#c0c0c4" stroke="#a0a0a4" stroke-width="0.5"/></g>
<g transform="translate(230.4 40.7)"><rect x="-4" y="-3.8" width="2.6" height="7.6" fill="#20d0d8" stroke="#10a0a8" stroke-width="0.4"/><circle cx="1.6" cy="0.6" r="1.9" fill="#f0e000" stroke="#444" stroke-width="0.5"/><rect x="0.8" y="2.4" width="1.6" height="1.4" fill="#555"/></g>
<g transform="translate(242.4 40.7)"><path d="M-4 -3.6 L-2 -1.6 M-2 -3.6 L-4 -1.6" stroke="#e02020" fill="none" stroke-width="0.8" stroke-linejoin="round" stroke-linecap="round"/><circle cx="1.6" cy="0.6" r="1.9" fill="#f0e000" stroke="#444" stroke-width="0.5"/><rect x="0.8" y="2.4" width="1.6" height="1.4" fill="#555"/></g>
<g transform="translate(253.5 40.7)"><path d="M-3.6 -1 L-1.8 -3 L0.6 -2 L3 -3 L2.8 1.4 L0.2 3 L-3.2 2.2 Z" stroke="#2030e0" fill="#f4d0d0" stroke-width="0.9" stroke-linejoin="round" stroke-linecap="round"/><path d="M-2 -0.8 L0 -1.2 L-0.2 1.2 L-2 1 Z" stroke="#e02020" fill="none" stroke-width="0.6" stroke-linejoin="round" stroke-linecap="round"/><circle cx="1.6" cy="0.6" r="1.9" fill="#f0e000" stroke="#444" stroke-width="0.5"/><rect x="0.8" y="2.4" width="1.6" height="1.4" fill="#555"/></g>
<g transform="translate(264.5 40.7)"><rect x="-3.8" y="-2.8" width="2.2" height="5.6" fill="#c4c4c8" stroke="#a0a0a4" stroke-width="0.4"/><rect x="-1.2" y="-1.6" width="1.6" height="4.4" fill="#c4c4c8" stroke="#a0a0a4" stroke-width="0.4"/><circle cx="2.2" cy="0.4" r="1.5" fill="#b0b0b4" stroke="#909094" stroke-width="0.5"/><rect x="1.6" y="1.8" width="1.2" height="1.6" fill="#909094"/></g>
<g transform="translate(275.5 40.7)"><rect x="-3.8" y="-2.8" width="2.2" height="5.6" fill="#c4c4c8" stroke="#a0a0a4" stroke-width="0.4"/><rect x="-1.2" y="-1.6" width="1.6" height="4.4" fill="#c4c4c8" stroke="#a0a0a4" stroke-width="0.4"/><circle cx="2.2" cy="0.4" r="1.5" fill="#b0b0b4" stroke="#909094" stroke-width="0.5"/><rect x="1.6" y="1.8" width="1.2" height="1.6" fill="#909094"/></g>
<line x1="283.8" y1="36.2" x2="283.8" y2="45.2" stroke="#a0a0a8" stroke-width="0.7"/>
<g transform="translate(291.5 40.7)"><circle cx="0" cy="-1" r="2.6" fill="#b4b4b8" stroke="#8c8c90" stroke-width="0.6"/><rect x="-1.2" y="1.4" width="2.4" height="2.2" fill="#8c8c90"/><circle cx="-0.8" cy="-1.8" r="0.9" fill="#e0e0e0"/></g>
<g transform="translate(303 40.7)"><rect x="-4" y="-3.8" width="2.6" height="7.6" fill="#20d0d8" stroke="#10a0a8" stroke-width="0.4"/><circle cx="1.8" cy="0.4" r="1.9" fill="#505054" stroke="#222" stroke-width="0.5"/><rect x="1" y="2.2" width="1.6" height="1.6" fill="#333"/><circle cx="1.4" cy="0" r="0.7" fill="#d0d0d0"/></g>
<g transform="translate(315 40.7)"><path d="M-4 -3.6 L-2 -1.6 M-2 -3.6 L-4 -1.6" stroke="#e02020" fill="none" stroke-width="0.8" stroke-linejoin="round" stroke-linecap="round"/><circle cx="1.6" cy="0.4" r="1.9" fill="#606064" stroke="#222" stroke-width="0.5"/><rect x="0.8" y="2.2" width="1.6" height="1.6" fill="#333"/><circle cx="1.2" cy="0" r="0.7" fill="#d0d0d0"/></g>
<g transform="translate(326 40.7)"><path d="M-3.6 -1 L-1.8 -3 L0.6 -2 L3 -3 L2.8 1.4 L0.2 3 L-3.2 2.2 Z" stroke="#2030e0" fill="#f4d0d0" stroke-width="0.9" stroke-linejoin="round" stroke-linecap="round"/><path d="M-2 -0.8 L0 -1.2 L-0.2 1.2 L-2 1 Z" stroke="#e02020" fill="none" stroke-width="0.6" stroke-linejoin="round" stroke-linecap="round"/><circle cx="1.8" cy="0.8" r="1.8" fill="#404044" stroke="#111" stroke-width="0.5"/><rect x="1" y="2.4" width="1.6" height="1.4" fill="#222"/></g>
<g transform="translate(337.3 40.7)"><rect x="-3.8" y="-2.8" width="2.2" height="5.6" fill="#c4c4c8" stroke="#a0a0a4" stroke-width="0.4"/><rect x="-1.2" y="-1.6" width="1.6" height="4.4" fill="#c4c4c8" stroke="#a0a0a4" stroke-width="0.4"/><circle cx="2.2" cy="0.4" r="1.5" fill="#b0b0b4" stroke="#909094" stroke-width="0.5"/><rect x="1.6" y="1.8" width="1.2" height="1.6" fill="#909094"/></g>
<g transform="translate(348.6 40.7)"><rect x="-3.8" y="-2.8" width="2.2" height="5.6" fill="#c4c4c8" stroke="#a0a0a4" stroke-width="0.4"/><rect x="-1.2" y="-1.6" width="1.6" height="4.4" fill="#c4c4c8" stroke="#a0a0a4" stroke-width="0.4"/><circle cx="2.2" cy="0.4" r="1.5" fill="#b0b0b4" stroke="#909094" stroke-width="0.5"/><rect x="1.6" y="1.8" width="1.2" height="1.6" fill="#909094"/></g>
<g transform="translate(360.2 40.7)"><rect x="-4.2" y="-2" width="3" height="3" fill="#505054"/><rect x="-0.8" y="-2" width="2.4" height="3" fill="#606064"/><circle cx="2.6" cy="-0.2" r="1.7" fill="#707074" stroke="#333" stroke-width="0.5"/><rect x="2" y="1.4" width="1.2" height="2" fill="#333"/></g>
<g transform="translate(382.3 40.900000000000006)"><path d="M-3.8 0 C-2 -2.8 2 -2.8 3.8 0 C2 2.8 -2 2.8 -3.8 0 Z" stroke="#1038e0" fill="#2060ff" stroke-width="0.7" stroke-linejoin="round" stroke-linecap="round"/><circle cx="0" cy="0" r="1.5" fill="#20d8e8"/><path d="M0 -3 L0 3" stroke="#10a0c0" fill="none" stroke-width="0.6" stroke-linejoin="round" stroke-linecap="round"/></g>
<g transform="translate(394.2 40.900000000000006)"><path d="M-3.8 2 L0 -2.6 L3.8 2 Z" stroke="#1038e0" fill="#2060ff" stroke-width="0.7" stroke-linejoin="round" stroke-linecap="round"/><path d="M-2.4 2.2 L2.4 2.2" stroke="#e040e0" fill="none" stroke-width="0.9" stroke-linejoin="round" stroke-linecap="round"/><circle cx="0" cy="0.6" r="1.2" fill="#20d8e8"/></g>
<g transform="translate(405.3 40.900000000000006)"><path d="M-4.2 -0.6 L4.2 -0.6 L2.8 1.8 L-3 1.8 Z" stroke="#1038e0" fill="#2060ff" stroke-width="0.6" stroke-linejoin="round" stroke-linecap="round"/><path d="M-1 -0.6 L-1 -2 L1.4 -2 L1.4 -0.6" stroke="#1038e0" fill="#20d8e8" stroke-width="0.6" stroke-linejoin="round" stroke-linecap="round"/></g>
<g transform="translate(416.7 40.900000000000006)"><path d="M-4.2 -0.4 L4.2 -0.4 L3 1.8 L-2.8 1.8 Z" stroke="#1038e0" fill="#2060ff" stroke-width="0.6" stroke-linejoin="round" stroke-linecap="round"/><path d="M-1.6 -0.4 L-1.6 -2 L1 -2 L1 -0.4" stroke="#1038e0" fill="#20d8e8" stroke-width="0.6" stroke-linejoin="round" stroke-linecap="round"/><path d="M-4 2.2 L4 2.2" stroke="#20d8e8" fill="none" stroke-width="0.6" stroke-linejoin="round" stroke-linecap="round"/></g>
<g transform="translate(428.3 40.900000000000006)"><path d="M-3.8 0 C-2 -2.8 2 -2.8 3.8 0 C2 2.8 -2 2.8 -3.8 0 Z" stroke="#1038e0" fill="#2060ff" stroke-width="0.7" stroke-linejoin="round" stroke-linecap="round"/><rect x="-1.6" y="-1" width="3.2" height="2" fill="#20d8e8"/><path d="M1.6 -1 L3 0 L1.6 1" stroke="#20e060" fill="none" stroke-width="0.6" stroke-linejoin="round" stroke-linecap="round"/></g>
<g transform="translate(440 40.900000000000006)"><path d="M-3.8 0 C-2 -2.8 2 -2.8 3.8 0 C2 2.8 -2 2.8 -3.8 0 Z" stroke="#1038e0" fill="#2060ff" stroke-width="0.7" stroke-linejoin="round" stroke-linecap="round"/><rect x="-2" y="-0.9" width="4" height="1.8" fill="#20d8e8"/><path d="M-3.8 0 L3.8 0" stroke="#e040e0" fill="none" stroke-width="0.5" stroke-linejoin="round" stroke-linecap="round"/></g>
<line x1="447.5" y1="36.2" x2="447.5" y2="45.2" stroke="#a0a0a8" stroke-width="0.7"/>
<g transform="translate(455.3 40.7)"><path d="M-3.6 0 L0 -3.4 L3.6 0 Z" stroke="#3020a0" fill="#4040e0" stroke-width="0.6" stroke-linejoin="round" stroke-linecap="round"/><rect x="-2.8" y="0" width="5.6" height="3.4" fill="#e020e0" stroke="#601090" stroke-width="0.5"/><rect x="-0.8" y="1.2" width="1.6" height="2.2" fill="#3020a0"/><path d="M1.6 -3.6 L1.6 -1.6" stroke="#c02020" fill="none" stroke-width="0.9" stroke-linejoin="round" stroke-linecap="round"/></g>
<g transform="translate(477.4 40.7)"><path d="M-3.4 -3 L1.8 1.4 L0.6 3 L-3.8 -1.6 Z" stroke="#222" fill="#f0f0f0" stroke-width="0.7" stroke-linejoin="round" stroke-linecap="round"/><circle cx="1.6" cy="2.6" r="1.2" fill="#20a0c0" stroke="#222" stroke-width="0.5"/><path d="M2 -3 L2 -0.6 M0.8 -1.8 L3.2 -1.8" stroke="#222" fill="none" stroke-width="0.6" stroke-linejoin="round" stroke-linecap="round"/></g>
<line x1="484.6" y1="36.2" x2="484.6" y2="45.2" stroke="#a0a0a8" stroke-width="0.7"/>
<g transform="translate(493.2 40.7)"><circle cx="-0.6" cy="-0.8" r="2.4" fill="#f0f0f0" stroke="#111" stroke-width="0.9"/><path d="M1.2 1 L3.6 3.4" stroke="#111" fill="none" stroke-width="1.3" stroke-linejoin="round" stroke-linecap="round"/><path d="M2.4 2.2 L3.8 3.6" stroke="#20a0d0" fill="none" stroke-width="1.0" stroke-linejoin="round" stroke-linecap="round"/><rect x="-2" y="-2" width="2.8" height="2.4" fill="#c0c0c0" stroke="#333" stroke-width="0.4"/></g>
<g transform="translate(504.5 40.7)"><circle cx="-0.6" cy="-0.8" r="2.4" fill="#f0f0f0" stroke="#111" stroke-width="0.9"/><path d="M1.2 1 L3.6 3.4" stroke="#111" fill="none" stroke-width="1.3" stroke-linejoin="round" stroke-linecap="round"/><path d="M2.4 2.2 L3.8 3.6" stroke="#20a0d0" fill="none" stroke-width="1.0" stroke-linejoin="round" stroke-linecap="round"/><circle cx="-0.6" cy="-0.8" r="0.9" fill="#111"/></g>
<g transform="translate(516.2 40.7)"><circle cx="-0.6" cy="-0.8" r="2.4" fill="#f0f0f0" stroke="#111" stroke-width="0.9"/><path d="M1.2 1 L3.6 3.4" stroke="#111" fill="none" stroke-width="1.3" stroke-linejoin="round" stroke-linecap="round"/><path d="M2.4 2.2 L3.8 3.6" stroke="#20a0d0" fill="none" stroke-width="1.0" stroke-linejoin="round" stroke-linecap="round"/><path d="M2.6 -3 L2.6 -0.4 M3.8 -3 L3.8 -0.4" stroke="#111" fill="none" stroke-width="0.7" stroke-linejoin="round" stroke-linecap="round"/></g>
<g transform="translate(527.2 40.7)"><circle cx="-0.6" cy="-0.8" r="2.4" fill="#f0f0f0" stroke="#b0b0b4" stroke-width="0.9"/><path d="M1.2 1 L3.6 3.4" stroke="#b0b0b4" fill="none" stroke-width="1.2" stroke-linejoin="round" stroke-linecap="round"/><path d="M-1.8 -0.8 L0.6 -0.8" stroke="#b0b0b4" fill="none" stroke-width="0.7" stroke-linejoin="round" stroke-linecap="round"/></g>
<g transform="translate(538.8 40.7)"><path d="M-3 -0.6 A3.2 3.2 0 0 1 2.6 -2 M3 0.6 A3.2 3.2 0 0 1 -2.6 2" stroke="#111" fill="none" stroke-width="1.1" stroke-linejoin="round" stroke-linecap="round"/><path d="M1.4 -3.6 L3.4 -1.6 L0.8 -1.2 Z M-1.4 3.6 L-3.4 1.6 L-0.8 1.2 Z" stroke="none" fill="#111" stroke-width="0.9" stroke-linejoin="round" stroke-linecap="round"/></g>
<g transform="translate(550.4 40.7)"><path d="M0 -3.8 L0 3.8 M-3.8 0 L3.8 0" stroke="#111" fill="none" stroke-width="1.1" stroke-linejoin="round" stroke-linecap="round"/><path d="M0 -4.2 L-1.4 -2.4 L1.4 -2.4 Z M0 4.2 L-1.4 2.4 L1.4 2.4 Z M-4.2 0 L-2.4 -1.4 L-2.4 1.4 Z M4.2 0 L2.4 -1.4 L2.4 1.4 Z" stroke="none" fill="#111" stroke-width="0.9" stroke-linejoin="round" stroke-linecap="round"/></g>
<rect x="573.2" y="36.1" width="11.3" height="10" fill="#f0f0f2" stroke="#5c5c60" stroke-width="0.9" rx="1.7"/>
<g transform="translate(578.8 41.1)"><rect x="-3.2" y="-1.6" width="4.6" height="4.8" fill="none" stroke="#111" stroke-width="0.9"/><rect x="-1.4" y="-3.2" width="4.6" height="4.8" fill="none" stroke="#111" stroke-width="0.9"/><path d="M-3.2 -1.6 L-1.4 -3.2 M1.4 -1.6 L3.2 -3.2 M1.4 3.2 L3.2 1.6" stroke="#111" fill="none" stroke-width="0.8" stroke-linejoin="round" stroke-linecap="round"/></g>
<g transform="translate(590.5 41.1)"><rect x="-3.2" y="-1.2" width="4.6" height="4.6" fill="#20d0d8" stroke="#111" stroke-width="0.8"/><path d="M-3.2 -1.2 L-1.4 -3 L3.2 -3 L3.2 1.6 L1.4 3.4 M1.4 -1.2 L3.2 -3" stroke="#111" fill="none" stroke-width="0.8" stroke-linejoin="round" stroke-linecap="round"/><path d="M-1.4 -3 L-1.4 -1.2" stroke="#c02020" fill="none" stroke-width="0.5" stroke-linejoin="round" stroke-linecap="round"/></g>
<g transform="translate(602 41.1)"><path d="M-3.8 -1.4 L-1.4 -3.4 L3.8 -2 L3.8 1.8 L1 3.6 L-3.8 2 Z" stroke="#10a8b0" fill="#20d8e0" stroke-width="0.5" stroke-linejoin="round" stroke-linecap="round"/><path d="M-3.8 -1.4 L1 0 L1 3.6 M1 0 L3.8 -2" stroke="#109098" fill="none" stroke-width="0.6" stroke-linejoin="round" stroke-linecap="round"/></g>
<rect x="607.8" y="36.1" width="11.4" height="10" fill="#e4e4e8" stroke="#5c5c60" stroke-width="0.9" rx="1.7"/>
<g transform="translate(613.5 41.1)"><rect x="-3" y="-1.2" width="4.4" height="4.6" fill="#20d0d8" stroke="#111" stroke-width="0.8"/><path d="M-3 -1.2 L-1.2 -3 L3.2 -3 L3.2 1.6 L1.4 3.4 M1.4 -1.2 L3.2 -3" stroke="#111" fill="none" stroke-width="0.8" stroke-linejoin="round" stroke-linecap="round"/><rect x="-1" y="0.2" width="3" height="3" fill="#40e8f0" stroke="#108088" stroke-width="0.4"/></g>
<g transform="translate(624.5 41.1)"><path d="M-3.4 -2 C-1.4 -3.6 1.4 -3.6 3.6 -2.4 C3 0.6 1.6 2.6 -0.6 3.4 C-2.6 1.6 -3.2 0 -3.4 -2 Z" stroke="#a0a0a4" fill="#b0b0b4" stroke-width="0.5" stroke-linejoin="round" stroke-linecap="round"/></g>
<g transform="translate(636 41.1)"><rect x="-4" y="-2.6" width="7.6" height="4.6" fill="#f4f4f4" stroke="#111" stroke-width="0.8"/><path d="M-3 -1.2 L2.6 -1.2 M-3 0.6 L1 0.6" stroke="#e02020" fill="none" stroke-width="0.9" stroke-linejoin="round" stroke-linecap="round"/><rect x="2.4" y="2" width="1.4" height="1.4" fill="#000"/></g>
<clipPath id="cTL"><rect x="117.2" y="58.6" width="292.8" height="236.2"/></clipPath><g clip-path="url(#cTL)">
<line x1="379" y1="90" x2="379" y2="295" stroke="#ababab" stroke-width="1.0" stroke-dasharray="1.0 3.0"/>
<line x1="118.9" y1="185.3" x2="406" y2="180.6" stroke="#ababab" stroke-width="1.0" stroke-dasharray="1.0 3.0"/>
<line x1="300" y1="178.9" x2="408" y2="178.7" stroke="#ababab" stroke-width="1.0" stroke-dasharray="1.0 3.0"/>
<text x="378.6" y="86.7" font-size="7.4" fill="#e8e8e8" textLength="5.3" lengthAdjust="spacingAndGlyphs">Z</text>
<text x="402.4" y="187" font-size="7.2" fill="#e8e8e8" textLength="4.8" lengthAdjust="spacingAndGlyphs">Y</text>
<text x="116.9" y="193" font-size="7.2" fill="#e8e8e8" textLength="4.6" lengthAdjust="spacingAndGlyphs">X</text>
<path d="M122.4 172.1 C133 172.1 139.4 164 140.3 152.1" stroke="#e05c5c" fill="none" stroke-width="1.0" />
<rect x="121.60000000000001" y="171.29999999999998" width="1.6" height="1.6" fill="#f4e020"/>
<rect x="134.2" y="171.29999999999998" width="1.6" height="1.6" fill="#f4e020"/>
<rect x="139.1" y="159.6" width="1.6" height="1.6" fill="#f4e020"/>
<rect x="139.5" y="151.29999999999998" width="1.6" height="1.6" fill="#f4e020"/>
<text x="136" y="171.9" font-size="7.2" fill="#e05c5c" font-weight="bold" textLength="21" lengthAdjust="spacingAndGlyphs">mc_3a</text>
<path d="M122.4 172.1 C128.7 173.6 147.1 177.9 160.0 181.0 C172.9 184.1 187.4 187.3 200.0 190.4 C212.6 193.5 228.6 197.4 235.7 199.3 C242.8 201.2 241.0 200.7 242.6 201.6 C244.2 202.5 244.6 203.7 245.4 205.0 C246.2 206.3 246.4 206.8 247.3 209.6 C248.2 212.4 249.1 216.1 250.7 222.1 C252.3 228.1 256.0 241.8 257.1 245.7" stroke="#22e822" fill="none" stroke-width="1.1" stroke-linecap="round" stroke-linejoin="round" />
<path d="M238.2 199.2 l2 1.4 l-2.2 0.4 z" stroke="none" fill="#22e822" stroke-width="1" />
<circle cx="250.7" cy="222.1" r="0.8" fill="#22e822"/>
<circle cx="157.5" cy="180.5" r="0.7" fill="#22e822"/>
<rect x="244.2" y="200.89999999999998" width="1.6" height="1.6" fill="#f4e020"/>
<rect x="256.3" y="244.89999999999998" width="1.6" height="1.6" fill="#f4e020"/>
<text x="240" y="207.6" font-size="7.2" fill="#22e822" font-weight="bold" textLength="21" lengthAdjust="spacingAndGlyphs">mc_3b</text>
<path d="M311.9 158.3 C312.1 159.5 312.9 163.3 312.9 165.7 C312.9 168.1 312.8 170.2 312.1 172.9 C311.4 175.6 310.1 179.2 308.6 182.1 C307.1 184.9 305.3 187.2 302.9 190.0 C300.5 192.8 296.9 195.8 294.3 198.6 C291.7 201.4 288.8 204.4 287.1 207.1 C285.4 209.8 284.7 211.5 284.0 214.6 C283.3 217.7 283.0 221.1 282.8 225.7 C282.6 230.3 282.9 239.4 282.9 242.1" stroke="#14b0bc" fill="none" stroke-width="1.1" stroke-linecap="round" stroke-linejoin="round" />
<rect x="311.09999999999997" y="157.5" width="1.6" height="1.6" fill="#f4e020"/>
<rect x="312.3" y="169.89999999999998" width="1.6" height="1.6" fill="#f4e020"/>
<rect x="307.5" y="185.2" width="1.6" height="1.6" fill="#f4e020"/>
<rect x="282.09999999999997" y="202.89999999999998" width="1.6" height="1.6" fill="#f4e020"/>
<rect x="281.8" y="220.2" width="1.6" height="1.6" fill="#f4e020"/>
<rect x="282.09999999999997" y="241.29999999999998" width="1.6" height="1.6" fill="#f4e020"/>
<text x="295.4" y="201.7" font-size="7.2" fill="#10dce4" font-weight="bold" textLength="16.5" lengthAdjust="spacingAndGlyphs">mc_2</text>
<path d="M397.9 156.9 C397.3 157.9 395.9 160.5 394.3 162.9 C392.8 165.3 391.2 168.5 388.6 171.4 C386.1 174.3 382.6 177.7 379.0 180.3 C375.4 182.9 371.7 184.7 367.1 187.1 C362.5 189.5 356.4 192.4 351.4 195.0 C346.4 197.6 341.4 200.2 337.1 202.9 C332.8 205.6 328.6 209.0 325.7 211.4 C322.8 213.8 323.4 212.7 320.0 217.1 C316.6 221.5 307.5 234.4 305.0 237.9" stroke="#14b0bc" fill="none" stroke-width="1.1" stroke-linecap="round" stroke-linejoin="round" />
<rect x="397.09999999999997" y="156.1" width="1.6" height="1.6" fill="#f4e020"/>
<rect x="388.9" y="171.2" width="1.6" height="1.6" fill="#f4e020"/>
<rect x="367.09999999999997" y="188.1" width="1.6" height="1.6" fill="#f4e020"/>
<rect x="331.09999999999997" y="201.2" width="1.6" height="1.6" fill="#f4e020"/>
<rect x="320.3" y="215.29999999999998" width="1.6" height="1.6" fill="#f4e020"/>
<rect x="304.2" y="237.1" width="1.6" height="1.6" fill="#f4e020"/>
<text x="351.1" y="201.4" font-size="7.2" fill="#10dce4" font-weight="bold" textLength="16" lengthAdjust="spacingAndGlyphs">mc_1</text>
</g>
<clipPath id="cTR"><rect x="413" y="50.8" width="285.4" height="244.6"/></clipPath><g clip-path="url(#cTR)">
<line x1="673.2" y1="56.9" x2="673.2" y2="284" stroke="#ababab" stroke-width="1.0" stroke-dasharray="1.0 3.0"/>
<line x1="415" y1="181.6" x2="480" y2="178" stroke="#ababab" stroke-width="1.0" stroke-dasharray="1.0 3.0"/>
<line x1="503.6" y1="176" x2="523.6" y2="174.3" stroke="#a08080" stroke-width="1.0" stroke-dasharray="1.0 3.0"/>
<line x1="543.4" y1="173" x2="672.9" y2="164.5" stroke="#b09090" stroke-width="1.0" stroke-dasharray="1.0 3.0"/>
<line x1="589" y1="162.6" x2="698.6" y2="164.4" stroke="#ababab" stroke-width="1.0" stroke-dasharray="1.0 3.0"/>
<text x="673.1" y="69.4" font-size="7.4" fill="#e8e8e8" textLength="5.5" lengthAdjust="spacingAndGlyphs">Z</text>
<path d="M463.0 146.4 C469.2 146.6 483.8 147.2 500.0 147.4 C516.2 147.6 543.3 147.8 560.0 147.8 C576.7 147.8 589.7 147.7 600.0 147.6 C610.3 147.5 614.8 147.6 622.0 147.4 C629.2 147.2 636.0 147.0 643.0 146.6 C650.0 146.2 658.1 145.6 664.3 144.9 C670.5 144.2 676.0 143.3 680.0 142.6 C684.0 141.9 687.2 141.2 688.6 140.9" stroke="#14b0bc" fill="none" stroke-width="1.0" stroke-linecap="round" stroke-linejoin="round" />
<path d="M460.4 155.4 C465.3 155.6 478.4 156.3 490.0 156.7 C501.6 157.1 511.7 157.3 530.0 157.9 C548.3 158.5 581.2 159.8 600.0 160.0 C618.8 160.2 632.3 159.8 643.0 159.3 C653.7 158.8 658.0 157.8 664.0 157.1 C670.0 156.4 676.8 155.3 679.3 155.0" stroke="#14b0bc" fill="none" stroke-width="1.0" stroke-linecap="round" stroke-linejoin="round" />
<path d="M454.9 162.5 C460.8 162.9 479.1 164.2 490.0 164.9 C500.9 165.6 508.3 166.1 520.0 166.7 C531.7 167.3 546.7 168.0 560.0 168.5 C573.3 169.0 586.2 169.5 600.0 169.5 C613.8 169.5 633.5 168.9 643.0 168.6 C652.5 168.2 652.7 168.0 657.0 167.4 C661.3 166.8 666.7 165.4 668.6 165.0" stroke="#14b0bc" fill="none" stroke-width="1.0" stroke-linecap="round" stroke-linejoin="round" />
<path d="M438.1 166.1 C440.0 166.5 444.4 167.7 449.7 168.5 C455.0 169.3 463.3 170.1 470.0 171.0 C476.7 171.9 484.2 172.8 490.0 173.8 C495.8 174.8 500.0 175.9 505.0 176.8 C510.0 177.8 513.7 178.6 520.0 179.5 C526.3 180.4 535.4 181.4 543.0 182.1 C550.6 182.8 556.2 183.4 565.7 183.9 C575.2 184.4 590.7 185.0 600.0 185.0 C609.3 185.0 615.4 184.5 621.4 184.0 C627.4 183.5 631.4 182.8 635.7 182.1 C640.0 181.4 645.1 180.3 647.0 180.0" stroke="#14b0bc" fill="none" stroke-width="1.0" stroke-linecap="round" stroke-linejoin="round" />
<path d="M539.4 188.4 C541.9 188.9 548.4 190.5 554.3 191.3 C560.2 192.1 567.3 192.8 574.9 193.0 C582.5 193.2 593.0 192.9 600.0 192.5 C607.0 192.1 612.2 191.3 617.0 190.7 C621.8 190.0 625.5 189.2 628.6 188.6 C631.7 188.0 634.5 187.3 635.7 187.0" stroke="#14b0bc" fill="none" stroke-width="1.0" stroke-linecap="round" stroke-linejoin="round" />
<path d="M553.6 193.6 C556.6 194.3 565.6 196.6 571.4 197.6 C577.2 198.6 583.8 199.2 588.6 199.6 C593.4 200.0 596.2 200.1 600.0 200.0 C603.8 199.9 607.4 200.1 611.4 199.3 C615.4 198.5 621.0 196.4 624.3 195.0 C627.6 193.6 630.2 191.4 631.4 190.7" stroke="#14b0bc" fill="none" stroke-width="1.0" stroke-linecap="round" stroke-linejoin="round" />
<path d="M557.1 205.7 C559.5 206.2 566.1 208.0 571.4 209.0 C576.6 210.0 583.8 211.1 588.6 211.6 C593.4 212.1 597.4 212.0 600.0 211.9 C602.6 211.8 601.4 211.8 604.3 210.9 C607.1 210.0 614.4 207.4 617.1 206.4 C619.8 205.4 620.0 205.1 620.6 204.8" stroke="#14b0bc" fill="none" stroke-width="1.0" stroke-linecap="round" stroke-linejoin="round" />
<path d="M463.0 146.4 C462.8 147.3 462.3 150.2 461.7 152.0 C461.1 153.8 460.4 155.4 459.1 157.1 C457.8 158.8 455.9 160.9 454.0 162.3 C452.1 163.7 450.6 164.7 448.0 165.3 C445.4 165.9 439.8 166.0 438.1 166.1" stroke="#14b0bc" fill="none" stroke-width="1.0" stroke-linecap="round" stroke-linejoin="round" />
<path d="M688.6 140.9 C688.1 141.9 687.1 144.8 685.7 147.1 C684.3 149.4 682.4 152.1 680.0 155.0 C677.6 157.9 674.7 161.3 671.4 164.3 C668.1 167.3 663.8 170.4 660.0 172.9 C656.2 175.4 651.9 177.3 648.6 179.3 C645.3 181.3 642.9 183.0 640.0 185.0 C637.1 187.0 633.9 189.1 631.4 191.4 C628.9 193.7 626.9 196.0 625.0 198.6 C623.1 201.2 621.8 204.2 620.0 207.1 C618.2 209.9 616.4 212.6 614.3 215.7 C612.1 218.8 608.3 224.0 607.1 225.7" stroke="#14b0bc" fill="none" stroke-width="1.0" stroke-linecap="round" stroke-linejoin="round" />
<path d="M438.1 166.1 C439.9 166.3 440.2 166.7 448.9 167.4 C457.5 168.2 478.1 169.6 490.0 170.6 C501.9 171.6 510.2 172.5 520.0 173.3 C529.8 174.1 540.0 174.8 548.6 175.3 C557.2 175.8 562.8 176.0 571.4 176.4 C580.0 176.8 589.3 177.4 600.0 177.6 C610.7 177.8 627.4 177.9 635.7 177.7 C644.0 177.5 646.2 176.9 650.0 176.2 C653.8 175.5 657.2 174.0 658.6 173.6" stroke="#1ed2de" fill="none" stroke-width="1.5" stroke-linecap="round" stroke-linejoin="round" />
<path d="M438.1 166.1 C441.8 167.0 451.4 169.4 460.0 171.3 C468.6 173.2 483.3 176.2 490.0 177.7 C496.7 179.1 495.0 179.0 500.0 180.0 C505.0 181.0 513.4 182.5 520.0 183.9 C526.6 185.3 536.2 187.7 539.4 188.4" stroke="#1ed2de" fill="none" stroke-width="1.2" stroke-linecap="round" stroke-linejoin="round" />
<path d="M520.0 183.9 C523.2 184.7 534.4 187.1 539.4 188.4 C544.4 189.7 547.2 190.5 549.7 191.9 C552.2 193.3 553.0 194.4 554.3 197.0 C555.6 199.6 556.4 202.6 557.7 207.3 C559.0 212.0 561.0 220.3 562.3 225.0 C563.6 229.7 565.1 233.9 565.7 235.7" stroke="#14b0bc" fill="none" stroke-width="1.0" stroke-linecap="round" stroke-linejoin="round" />
<path d="M607.1 225.7 L588.6 230.7 L565.7 235.7" stroke="#14b0bc" fill="none" stroke-width="1.0" stroke-linecap="round" stroke-linejoin="round" />
<path d="M621.7 147.4 C621.7 149.3 622.1 155.6 621.7 158.6 C621.3 161.6 620.8 163.1 619.3 165.7 C617.8 168.3 615.2 171.7 612.9 174.3 C610.6 176.9 607.9 179.5 605.7 181.4 C603.6 183.3 602.1 183.8 600.0 186.0 C597.9 188.2 594.8 192.1 593.1 194.7 C591.4 197.3 590.5 198.9 589.7 201.6 C589.0 204.3 588.8 205.8 588.6 210.7 C588.4 215.5 588.3 227.4 588.3 230.7" stroke="#14b0bc" fill="none" stroke-width="1.0" stroke-linecap="round" stroke-linejoin="round" />
<path d="M494.6 146.9 C494.6 147.7 494.7 149.7 494.3 151.4 C493.9 153.1 493.3 155.1 492.1 157.1 C490.9 159.1 489.6 161.7 487.1 163.6 C484.6 165.5 480.6 167.1 477.1 168.6 C473.7 170.1 468.2 171.8 466.4 172.4" stroke="#c8c010" fill="none" stroke-width="1.1" stroke-linecap="round" stroke-linejoin="round" />
<path d="M525.4 147.9 C525.4 149.0 525.6 152.1 525.2 154.3 C524.8 156.6 524.2 159.1 522.9 161.4 C521.5 163.7 519.5 166.1 517.1 167.9 C514.7 169.7 512.4 170.7 508.6 172.4 C504.8 174.1 496.7 177.0 494.3 177.9" stroke="#c8c010" fill="none" stroke-width="1.1" stroke-linecap="round" stroke-linejoin="round" />
<path d="M551.7 147.9 C551.7 149.0 551.9 152.1 551.6 154.3 C551.3 156.6 551.0 159.1 550.0 161.4 C549.0 163.7 547.9 165.9 545.7 167.9 C543.6 169.9 540.2 171.7 537.1 173.6 C534.0 175.5 530.3 177.6 527.1 179.3 C523.9 181.0 519.4 183.2 517.9 184.0" stroke="#c8c010" fill="none" stroke-width="1.1" stroke-linecap="round" stroke-linejoin="round" />
<path d="M574.6 147.9 C574.6 149.2 574.8 153.3 574.5 155.7 C574.2 158.1 573.9 159.8 572.9 162.1 C571.9 164.4 570.5 167.0 568.6 169.3 C566.7 171.6 564.3 173.6 561.4 175.7 C558.5 177.8 555.1 180.0 551.4 182.1 C547.7 184.2 541.4 187.3 539.4 188.4" stroke="#c8c010" fill="none" stroke-width="1.1" stroke-linecap="round" stroke-linejoin="round" />
<path d="M594.6 147.9 C594.6 149.3 594.7 153.9 594.5 156.4 C594.3 158.9 594.4 160.6 593.6 162.9 C592.9 165.2 592.0 167.6 590.0 170.0 C588.0 172.4 584.7 174.9 581.4 177.4 C578.1 179.9 573.2 182.6 570.0 185.0 C566.8 187.4 564.1 189.9 562.3 191.9 C560.5 193.9 560.0 194.4 559.4 197.0 C558.8 199.6 558.5 204.6 558.5 207.3 C558.5 210.0 559.2 212.1 559.4 213.0" stroke="#c8c010" fill="none" stroke-width="1.1" stroke-linecap="round" stroke-linejoin="round" />
<path d="M612.1 147.4 C612.1 148.8 612.3 152.9 612.1 155.7 C611.9 158.5 611.8 161.4 610.7 164.3 C609.6 167.2 607.5 170.6 605.7 172.9 C603.9 175.2 602.5 176.1 600.0 178.4 C597.5 180.7 593.8 184.2 590.9 186.7 C588.0 189.2 584.8 191.3 582.9 193.6 C581.0 195.9 580.2 197.6 579.4 200.4 C578.6 203.2 578.5 205.3 578.3 210.7 C578.1 216.1 578.0 229.2 578.0 232.9" stroke="#c8c010" fill="none" stroke-width="1.1" stroke-linecap="round" stroke-linejoin="round" />
<text x="492.9" y="184.7" font-size="7.2" fill="#10dce4" font-weight="bold" textLength="16.4" lengthAdjust="spacingAndGlyphs">mc_3</text>
<text x="602.6" y="190" font-size="7.2" fill="#10dce4" font-weight="bold" textLength="16.7" lengthAdjust="spacingAndGlyphs">mc_2</text>
<text x="647.9" y="186.9" font-size="7.2" fill="#10dce4" font-weight="bold" textLength="16.4" lengthAdjust="spacingAndGlyphs">mc_1</text>
</g>
<clipPath id="cBL"><rect x="117.2" y="297.6" width="292.8" height="216"/></clipPath><g clip-path="url(#cBL)">
<line x1="302.9" y1="298" x2="263.2" y2="355" stroke="#a8a8a8" stroke-width="1.2" stroke-dasharray="1.2 3.7"/>
<line x1="263.2" y1="355" x2="230.7" y2="402" stroke="#a8a8a8" stroke-width="1.2" stroke-dasharray="1.2 3.7"/>
<line x1="230.7" y1="402" x2="156.8" y2="511.3" stroke="#a8a8a8" stroke-width="1.2" stroke-dasharray="1.2 3.7"/>
<path d="M168.6 297.6 L148.2 315.0 L128.9 406.4 L118.2 449.1 L117.2 453.0" stroke="#14b0bc" fill="none" stroke-width="1.0" stroke-linecap="round" stroke-linejoin="round" />
<path d="M127.9 408.4 C130.2 405.0 137.0 394.8 142.0 388.0 C147.0 381.2 151.7 375.0 157.9 367.9 C164.1 360.8 173.2 350.8 179.3 345.4 C185.4 340.0 190.0 338.0 194.3 335.7 C198.6 333.4 202.2 332.0 205.0 331.4 C207.8 330.8 209.6 331.1 211.4 331.9 C213.2 332.7 215.2 335.3 216.0 336.0" stroke="#14b0bc" fill="none" stroke-width="1.0" stroke-linecap="round" stroke-linejoin="round" />
<path d="M192.6 298.0 C192.6 299.0 192.7 302.0 192.8 304.0 C192.8 306.0 192.8 308.0 192.8 310.0 C192.8 312.0 192.8 314.1 192.8 316.1 C192.9 318.2 192.9 320.3 192.9 322.4 C192.9 324.4 193.0 326.5 193.0 328.6 C193.1 330.8 193.2 332.9 193.3 335.0 C193.4 337.1 193.5 339.2 193.6 341.3 C193.8 343.4 194.0 345.5 194.2 347.6 C194.4 349.7 194.6 351.8 194.9 353.9 C195.2 356.0 195.5 358.0 195.8 360.1 C196.2 362.1 196.6 364.2 197.1 366.2 C197.5 368.2 198.0 370.2 198.6 372.1 C199.1 374.1 199.8 376.0 200.4 378.0 C201.1 379.9 201.8 381.7 202.6 383.6 C203.4 385.4 204.3 387.2 205.2 389.0 C206.1 390.8 207.1 392.6 208.1 394.3 C209.1 396.0 210.2 397.7 211.3 399.4 C212.4 401.1 213.6 402.7 214.8 404.3 C216.0 405.9 217.2 407.5 218.5 409.1 C219.8 410.6 221.1 412.2 222.5 413.7 C223.8 415.2 225.2 416.7 226.6 418.1 C228.1 419.6 229.5 421.0 231.0 422.5 C232.5 423.9 234.0 425.3 235.6 426.6 C237.1 428.0 238.7 429.3 240.2 430.7 C241.8 432.0 243.4 433.3 245.0 434.6 C246.6 435.9 248.3 437.2 249.9 438.5 C251.5 439.7 253.2 441.0 254.8 442.3 C256.5 443.5 258.2 444.8 259.8 446.0 C261.5 447.3 263.1 448.5 264.8 449.8 C266.5 451.0 268.1 452.3 269.8 453.5 C271.4 454.8 273.1 456.0 274.7 457.3 C276.3 458.6 277.9 459.9 279.5 461.2 C281.1 462.5 282.7 463.8 284.3 465.1 C285.8 466.5 287.4 467.8 288.9 469.2 C290.4 470.5 291.9 471.9 293.4 473.4 C294.8 474.8 296.3 476.2 297.7 477.7 C299.1 479.2 300.4 480.7 301.7 482.2 C303.1 483.8 304.4 485.3 305.6 486.9 C306.8 488.5 308.0 490.2 309.2 491.9 C310.3 493.6 311.4 495.3 312.5 497.1 C313.5 498.9 314.5 500.7 315.5 502.6 C316.4 504.4 317.3 506.4 318.1 508.3 C319.0 510.3 320.3 513.1 320.7 514.0" stroke="#14b0bc" fill="none" stroke-width="1.0" stroke-linecap="round" stroke-linejoin="round" />
<path d="M212.5 298.0 C212.7 300.4 213.1 306.9 213.6 312.1 C214.1 317.3 215.0 323.9 215.7 329.3 C216.4 334.7 217.0 340.2 217.9 344.3 C218.8 348.4 219.9 351.7 221.0 353.9 C222.1 356.1 223.8 357.0 224.3 357.6" stroke="#14b0bc" fill="none" stroke-width="1.0" stroke-linecap="round" stroke-linejoin="round" />
<path d="M224.3 357.6 C225.2 357.1 228.0 355.5 229.9 354.5 C231.8 353.4 233.8 352.5 235.7 351.5 C237.6 350.6 239.5 349.6 241.5 348.7 C243.4 347.8 245.4 346.8 247.3 345.9 C249.2 345.0 251.2 344.1 253.1 343.2 C255.1 342.3 257.0 341.4 259.0 340.5 C261.0 339.6 262.9 338.8 264.9 337.9 C266.8 337.0 268.8 336.1 270.7 335.2 C272.7 334.3 274.6 333.4 276.6 332.5 C278.5 331.6 280.5 330.7 282.4 329.8 C284.4 328.9 286.3 328.0 288.2 327.1 C290.2 326.1 292.1 325.2 294.0 324.3 C296.0 323.3 297.9 322.3 299.8 321.3 C301.7 320.4 303.6 319.4 305.5 318.3 C307.4 317.3 309.2 316.2 311.1 315.2 C313.0 314.2 315.9 312.6 316.8 312.1" stroke="#14b0bc" fill="none" stroke-width="1.0" stroke-linecap="round" stroke-linejoin="round" />
<path d="M316.8 312.1 C317.9 312.2 321.1 312.4 323.3 312.6 C325.5 312.8 327.7 313.1 329.8 313.4 C332.0 313.7 334.2 314.1 336.3 314.5 C338.5 314.9 340.6 315.3 342.8 315.8 C344.9 316.3 347.1 316.9 349.2 317.5 C351.3 318.1 353.5 318.7 355.5 319.4 C357.6 320.1 359.7 320.8 361.8 321.6 C363.9 322.4 365.9 323.2 367.9 324.1 C369.9 325.0 371.9 325.9 373.9 326.9 C375.9 327.9 377.8 328.9 379.7 330.0 C381.6 331.1 383.5 332.2 385.4 333.4 C387.2 334.6 389.0 335.8 390.8 337.1 C392.6 338.4 394.3 339.7 396.0 341.1 C397.7 342.5 399.4 343.9 401.0 345.4 C402.6 346.9 404.2 348.4 405.7 350.0 C407.2 351.6 409.3 354.2 410.0 355.0" stroke="#14b0bc" fill="none" stroke-width="1.0" stroke-linecap="round" stroke-linejoin="round" />
<path d="M410.0 391.4 C409.7 392.4 409.0 395.5 408.4 397.5 C407.8 399.6 407.3 401.6 406.7 403.6 C406.1 405.7 405.4 407.7 404.8 409.7 C404.2 411.7 403.5 413.7 402.8 415.7 C402.2 417.8 401.5 419.8 400.8 421.7 C400.1 423.7 399.4 425.7 398.6 427.7 C397.9 429.7 397.2 431.7 396.4 433.6 C395.7 435.6 394.9 437.6 394.1 439.6 C393.3 441.5 392.5 443.5 391.7 445.4 C390.9 447.4 390.1 449.3 389.2 451.3 C388.4 453.2 387.6 455.2 386.7 457.1 C385.8 459.0 385.0 461.0 384.1 462.9 C383.2 464.8 382.3 466.7 381.4 468.7 C380.6 470.6 379.6 472.5 378.7 474.4 C377.8 476.3 376.9 478.2 376.0 480.1 C375.0 482.0 374.1 483.9 373.2 485.8 C372.2 487.7 371.3 489.6 370.3 491.5 C369.4 493.4 368.4 495.3 367.4 497.1 C366.5 499.0 365.5 500.9 364.5 502.8 C363.5 504.7 362.5 506.5 361.6 508.4 C360.6 510.3 359.1 513.1 358.6 514.0" stroke="#14b0bc" fill="none" stroke-width="1.0" stroke-linecap="round" stroke-linejoin="round" />
<path d="M407.9 351.8 C407.8 352.8 407.6 355.9 407.4 358.0 C407.2 360.1 407.0 362.2 406.8 364.3 C406.6 366.4 406.3 368.4 406.0 370.5 C405.7 372.6 405.3 374.6 405.0 376.7 C404.6 378.7 404.2 380.7 403.7 382.8 C403.3 384.8 402.8 386.8 402.3 388.8 C401.8 390.8 401.2 392.8 400.7 394.8 C400.1 396.8 399.5 398.7 398.8 400.7 C398.2 402.7 397.6 404.6 396.9 406.6 C396.2 408.5 395.5 410.4 394.7 412.4 C394.0 414.3 393.2 416.2 392.4 418.1 C391.6 420.0 390.8 421.9 390.0 423.8 C389.1 425.7 388.3 427.6 387.4 429.5 C386.5 431.4 385.6 433.2 384.7 435.1 C383.7 436.9 382.8 438.8 381.8 440.6 C380.9 442.5 379.9 444.3 378.9 446.1 C377.9 448.0 376.9 449.8 375.8 451.6 C374.8 453.4 373.8 455.2 372.7 457.0 C371.6 458.8 370.6 460.6 369.5 462.3 C368.4 464.1 367.3 465.9 366.2 467.7 C365.1 469.4 363.9 471.2 362.8 472.9 C361.7 474.7 360.5 476.4 359.4 478.2 C358.2 479.9 357.1 481.6 355.9 483.4 C354.7 485.1 353.6 486.8 352.4 488.5 C351.2 490.2 350.0 491.9 348.9 493.6 C347.7 495.3 346.5 497.0 345.3 498.7 C344.1 500.4 342.9 502.0 341.7 503.7 C340.5 505.4 339.2 507.0 338.1 508.7 C337.0 510.4 335.5 513.1 335.0 514.0" stroke="#14b0bc" fill="none" stroke-width="1.0" stroke-linecap="round" stroke-linejoin="round" />
<path d="M393.9 338.9 C393.9 339.9 393.9 343.1 393.7 345.2 C393.6 347.3 393.3 349.5 393.0 351.6 C392.7 353.7 392.4 355.8 392.0 357.9 C391.6 360.0 391.2 362.1 390.8 364.2 C390.3 366.2 389.8 368.3 389.3 370.3 C388.8 372.4 388.2 374.4 387.6 376.4 C387.1 378.4 386.4 380.4 385.8 382.4 C385.1 384.4 384.4 386.4 383.7 388.3 C382.9 390.3 382.2 392.2 381.4 394.2 C380.6 396.1 379.8 398.0 378.9 399.9 C378.1 401.8 377.2 403.7 376.3 405.6 C375.4 407.5 374.4 409.4 373.4 411.2 C372.5 413.1 371.5 414.9 370.5 416.7 C369.4 418.6 368.4 420.4 367.3 422.2 C366.3 424.0 365.2 425.8 364.0 427.6 C362.9 429.4 361.8 431.2 360.6 432.9 C359.5 434.7 358.3 436.4 357.1 438.2 C355.9 439.9 354.7 441.6 353.4 443.4 C352.2 445.1 350.9 446.8 349.6 448.5 C348.4 450.2 347.1 451.9 345.8 453.5 C344.5 455.2 343.1 456.9 341.8 458.5 C340.5 460.2 339.1 461.8 337.7 463.4 C336.4 465.1 335.0 466.7 333.6 468.3 C332.2 469.9 330.8 471.5 329.4 473.1 C328.0 474.7 326.6 476.3 325.2 477.8 C323.7 479.4 322.3 481.0 320.9 482.5 C319.4 484.1 318.0 485.6 316.5 487.1 C315.1 488.7 313.6 490.2 312.1 491.7 C310.7 493.2 309.2 494.7 307.7 496.2 C306.3 497.7 304.8 499.2 303.3 500.7 C301.8 502.1 300.4 503.6 298.9 505.1 C297.4 506.5 295.9 507.9 294.5 509.4 C293.0 510.9 290.7 513.2 290.0 514.0" stroke="#14b0bc" fill="none" stroke-width="1.0" stroke-linecap="round" stroke-linejoin="round" />
<path d="M369.3 325.0 C369.3 326.0 369.4 329.2 369.2 331.3 C369.0 333.4 368.6 335.5 368.2 337.6 C367.9 339.7 367.4 341.8 367.0 343.9 C366.5 345.9 366.0 348.0 365.5 350.0 C365.0 352.0 364.4 354.1 363.8 356.1 C363.2 358.0 362.5 360.0 361.9 362.0 C361.2 363.9 360.5 365.9 359.7 367.8 C359.0 369.8 358.2 371.7 357.4 373.6 C356.6 375.5 355.7 377.3 354.8 379.2 C354.0 381.1 353.1 382.9 352.1 384.7 C351.2 386.6 350.2 388.4 349.2 390.2 C348.2 392.0 347.2 393.8 346.1 395.6 C345.1 397.3 344.0 399.1 342.9 400.8 C341.8 402.6 340.6 404.3 339.5 406.0 C338.3 407.8 337.1 409.5 335.9 411.1 C334.7 412.8 333.5 414.5 332.2 416.2 C331.0 417.8 329.7 419.5 328.4 421.1 C327.1 422.7 325.8 424.4 324.4 426.0 C323.1 427.6 321.8 429.2 320.4 430.8 C319.0 432.3 317.6 433.9 316.2 435.5 C314.8 437.0 313.4 438.6 311.9 440.1 C310.5 441.7 309.0 443.2 307.6 444.7 C306.1 446.2 304.6 447.7 303.1 449.2 C301.6 450.7 300.1 452.2 298.6 453.6 C297.0 455.1 295.5 456.6 294.0 458.0 C292.4 459.5 290.9 460.9 289.3 462.3 C287.7 463.8 286.2 465.2 284.6 466.6 C283.0 468.0 281.4 469.4 279.8 470.8 C278.2 472.2 276.6 473.5 275.0 474.9 C273.4 476.3 271.8 477.6 270.2 479.0 C268.6 480.4 267.0 481.7 265.3 483.0 C263.7 484.4 262.1 485.7 260.5 487.0 C258.8 488.3 257.2 489.6 255.6 490.9 C254.0 492.3 252.3 493.5 250.7 494.8 C249.1 496.1 247.5 497.4 245.9 498.7 C244.2 500.0 242.6 501.2 241.0 502.5 C239.4 503.7 237.8 505.0 236.2 506.2 C234.6 507.5 233.1 508.7 231.4 510.0 C229.8 511.3 227.2 513.3 226.4 514.0" stroke="#14b0bc" fill="none" stroke-width="1.0" stroke-linecap="round" stroke-linejoin="round" />
<path d="M333.9 315.4 C333.8 316.5 333.8 319.7 333.5 321.8 C333.1 323.8 332.5 325.9 332.0 327.9 C331.4 329.9 330.8 331.9 330.2 333.9 C329.5 335.9 328.9 337.8 328.2 339.8 C327.4 341.7 326.7 343.6 325.9 345.5 C325.1 347.4 324.2 349.3 323.4 351.1 C322.5 353.0 321.6 354.8 320.6 356.6 C319.7 358.5 318.7 360.3 317.7 362.0 C316.7 363.8 315.6 365.6 314.5 367.3 C313.5 369.1 312.3 370.8 311.2 372.5 C310.1 374.2 308.9 375.9 307.7 377.6 C306.5 379.3 305.3 381.0 304.1 382.6 C302.8 384.3 301.5 385.9 300.2 387.6 C299.0 389.2 297.6 390.8 296.3 392.4 C295.0 394.0 293.6 395.6 292.2 397.1 C290.9 398.7 289.5 400.3 288.1 401.8 C286.7 403.4 285.2 404.9 283.8 406.4 C282.4 407.9 280.9 409.4 279.4 410.9 C278.0 412.5 276.5 413.9 275.0 415.4 C273.5 416.9 272.0 418.4 270.5 419.8 C269.0 421.3 267.5 422.7 266.0 424.2 C264.5 425.6 263.0 427.1 261.4 428.5 C259.9 429.9 258.4 431.3 256.8 432.7 C255.3 434.2 253.8 435.6 252.2 437.0 C250.7 438.3 249.1 439.7 247.5 441.1 C246.0 442.5 244.4 443.9 242.8 445.2 C241.3 446.6 239.7 448.0 238.1 449.3 C236.5 450.7 235.0 452.0 233.4 453.3 C231.8 454.7 230.2 456.0 228.6 457.3 C227.0 458.7 225.4 460.0 223.8 461.3 C222.2 462.6 220.6 463.9 219.0 465.2 C217.4 466.5 215.7 467.8 214.1 469.1 C212.5 470.4 210.9 471.7 209.3 473.0 C207.6 474.3 206.0 475.6 204.4 476.8 C202.7 478.1 201.1 479.4 199.4 480.6 C197.8 481.9 196.2 483.2 194.5 484.4 C192.9 485.7 191.2 486.9 189.5 488.2 C187.9 489.4 186.2 490.7 184.6 491.9 C182.9 493.2 181.2 494.4 179.6 495.6 C177.9 496.9 176.2 498.1 174.6 499.3 C172.9 500.6 171.2 501.8 169.5 503.0 C167.9 504.3 166.2 505.5 164.5 506.7 C162.8 507.9 161.1 509.1 159.4 510.4 C157.7 511.6 155.2 513.4 154.3 514.0" stroke="#14b0bc" fill="none" stroke-width="1.0" stroke-linecap="round" stroke-linejoin="round" />
<path d="M276.1 333.6 C275.7 334.6 274.7 337.5 273.8 339.4 C272.9 341.3 271.8 343.1 270.8 344.9 C269.8 346.7 268.7 348.5 267.6 350.3 C266.6 352.1 265.5 353.9 264.4 355.7 C263.2 357.4 262.1 359.2 261.0 360.9 C259.8 362.6 258.6 364.3 257.4 366.0 C256.2 367.7 255.0 369.4 253.8 371.1 C252.6 372.7 251.3 374.4 250.0 376.0 C248.8 377.6 247.5 379.3 246.2 380.9 C244.9 382.5 243.6 384.1 242.2 385.7 C240.9 387.2 239.5 388.8 238.2 390.4 C236.8 391.9 235.4 393.5 234.0 395.0 C232.6 396.5 231.2 398.1 229.8 399.6 C228.4 401.1 226.9 402.6 225.5 404.1 C224.1 405.6 222.6 407.1 221.1 408.5 C219.7 410.0 218.2 411.5 216.7 412.9 C215.2 414.4 213.7 415.8 212.2 417.3 C210.7 418.7 209.1 420.1 207.6 421.5 C206.1 423.0 204.6 424.4 203.0 425.8 C201.5 427.2 199.9 428.6 198.3 430.0 C196.8 431.4 195.2 432.8 193.6 434.1 C192.1 435.5 190.5 436.9 188.9 438.3 C187.3 439.6 185.7 441.0 184.1 442.4 C182.6 443.7 181.0 445.1 179.4 446.4 C177.8 447.8 176.2 449.1 174.6 450.5 C172.9 451.8 171.3 453.1 169.7 454.5 C168.1 455.8 166.5 457.2 164.9 458.5 C163.3 459.8 161.7 461.2 160.1 462.5 C158.5 463.8 156.8 465.2 155.2 466.5 C153.6 467.8 152.0 469.1 150.4 470.5 C148.8 471.8 147.2 473.1 145.6 474.5 C144.0 475.8 142.4 477.1 140.8 478.4 C139.2 479.8 137.6 481.1 136.0 482.4 C134.4 483.8 132.9 485.1 131.3 486.5 C129.7 487.8 128.1 489.1 126.6 490.5 C125.0 491.8 123.5 493.2 121.9 494.5 C120.4 495.9 118.0 497.9 117.2 498.6" stroke="#14b0bc" fill="none" stroke-width="1.0" stroke-linecap="round" stroke-linejoin="round" />
<path d="M224.3 357.6 C223.9 357.9 224.6 357.4 222.1 359.3 C219.6 361.2 217.7 360.9 209.3 368.9 C200.9 376.8 183.2 395.3 171.8 407.0 C160.4 418.7 149.8 429.7 140.7 439.0 C131.6 448.3 121.1 459.0 117.2 463.0" stroke="#14b0bc" fill="none" stroke-width="1.0" stroke-linecap="round" stroke-linejoin="round" />
<path d="M316.8 312.1 C316.8 313.2 317.1 316.4 317.0 318.5 C316.8 320.6 316.3 322.6 315.9 324.7 C315.5 326.7 315.0 328.7 314.5 330.7 C314.0 332.7 313.4 334.7 312.7 336.6 C312.1 338.5 311.4 340.4 310.6 342.3 C309.8 344.1 309.0 346.0 308.2 347.8 C307.3 349.6 306.4 351.4 305.4 353.2 C304.5 355.0 303.5 356.7 302.4 358.4 C301.4 360.2 300.3 361.9 299.2 363.5 C298.1 365.2 296.9 366.9 295.7 368.5 C294.6 370.2 293.3 371.8 292.1 373.4 C290.8 375.0 289.5 376.6 288.2 378.2 C286.9 379.7 285.6 381.3 284.2 382.8 C282.8 384.4 281.4 385.9 280.0 387.4 C278.6 388.9 277.2 390.4 275.8 391.9 C274.3 393.3 272.9 394.8 271.4 396.3 C269.9 397.7 268.4 399.2 267.0 400.6 C265.5 402.0 264.0 403.5 262.5 404.9 C261.0 406.3 259.4 407.7 257.9 409.1 C256.4 410.5 254.9 411.9 253.3 413.3 C251.8 414.7 250.3 416.0 248.7 417.4 C247.2 418.8 245.6 420.1 244.1 421.5 C242.5 422.8 240.9 424.2 239.4 425.5 C237.8 426.9 236.2 428.2 234.6 429.5 C233.1 430.9 231.5 432.2 229.9 433.5 C228.3 434.8 226.7 436.1 225.1 437.4 C223.5 438.7 221.9 440.0 220.3 441.3 C218.7 442.6 217.1 443.9 215.5 445.2 C213.9 446.5 212.3 447.8 210.7 449.0 C209.1 450.3 207.5 451.6 205.9 452.9 C204.2 454.1 202.6 455.4 201.0 456.7 C199.4 458.0 197.8 459.2 196.1 460.5 C194.5 461.7 192.9 463.0 191.3 464.3 C189.6 465.5 188.0 466.8 186.4 468.1 C184.8 469.3 183.2 470.6 181.5 471.8 C179.9 473.1 178.3 474.3 176.7 475.6 C175.0 476.9 173.4 478.1 171.8 479.4 C170.2 480.6 168.6 481.9 167.0 483.2 C165.3 484.4 163.7 485.7 162.1 487.0 C160.5 488.2 158.9 489.5 157.3 490.8 C155.7 492.0 154.1 493.3 152.5 494.6 C150.9 495.9 149.3 497.1 147.7 498.4 C146.1 499.7 144.5 501.0 142.9 502.3 C141.3 503.6 139.7 504.9 138.2 506.2 C136.6 507.5 135.0 508.8 133.4 510.1 C131.9 511.4 129.4 513.3 128.6 514.0" stroke="#1ed2de" fill="none" stroke-width="1.25" stroke-linecap="round" stroke-linejoin="round" />
<path d="M297.5 321.8 C298.5 322.0 301.7 322.4 303.8 322.8 C305.8 323.1 307.7 323.6 309.8 324.0 C311.8 324.4 313.8 324.9 315.9 325.4 C317.9 325.9 320.0 326.4 322.1 326.9 C324.2 327.4 326.2 328.0 328.3 328.5 C330.4 329.1 332.5 329.7 334.6 330.3 C336.7 331.0 338.7 331.6 340.8 332.3 C342.9 333.0 345.0 333.7 347.0 334.5 C349.1 335.2 351.1 336.0 353.1 336.8 C355.2 337.6 357.2 338.5 359.1 339.4 C361.1 340.3 363.1 341.2 365.0 342.1 C367.0 343.1 368.9 344.1 370.8 345.2 C372.6 346.2 374.5 347.3 376.3 348.4 C378.1 349.6 379.9 350.7 381.6 352.0 C383.3 353.2 385.0 354.5 386.6 355.8 C388.2 357.1 389.8 358.5 391.3 360.0 C392.7 361.4 394.2 362.9 395.5 364.5 C396.9 366.0 398.1 367.7 399.3 369.3 C400.5 371.0 401.6 372.8 402.6 374.6 C403.7 376.4 404.6 378.3 405.4 380.3 C406.2 382.2 407.0 384.3 407.5 386.4 C408.1 388.5 408.4 391.9 408.6 393.0" stroke="#c8c010" fill="none" stroke-width="1.0" stroke-linecap="round" stroke-linejoin="round" />
<path d="M277.1 332.5 C278.2 332.6 281.5 332.7 283.6 333.0 C285.7 333.3 287.7 333.8 289.8 334.3 C291.8 334.7 293.9 335.3 295.9 335.8 C297.9 336.3 300.0 336.9 302.0 337.5 C304.0 338.1 306.0 338.8 308.0 339.5 C310.0 340.1 312.0 340.9 314.0 341.6 C316.0 342.3 318.0 343.1 320.0 343.9 C322.0 344.6 324.0 345.4 326.0 346.2 C328.0 347.1 330.0 347.9 331.9 348.7 C333.9 349.6 335.9 350.4 337.9 351.3 C339.9 352.2 341.9 353.1 343.8 354.0 C345.8 354.9 347.8 355.9 349.7 356.9 C351.6 357.8 353.5 358.8 355.4 359.9 C357.3 360.9 359.2 362.0 361.1 363.1 C362.9 364.2 364.8 365.3 366.6 366.5 C368.3 367.7 370.1 368.9 371.8 370.2 C373.6 371.4 375.3 372.7 376.9 374.1 C378.5 375.4 380.2 376.8 381.7 378.3 C383.2 379.7 384.7 381.2 386.1 382.8 C387.5 384.3 388.8 385.9 390.1 387.6 C391.3 389.2 392.5 391.0 393.5 392.7 C394.6 394.5 395.5 396.3 396.4 398.2 C397.2 400.1 398.0 402.1 398.6 404.1 C399.2 406.1 399.7 408.2 400.0 410.3 C400.3 412.5 400.6 414.7 400.6 417.0 C400.6 419.2 400.1 422.5 400.0 423.6" stroke="#c8c010" fill="none" stroke-width="1.0" stroke-linecap="round" stroke-linejoin="round" />
<path d="M255.4 343.2 C256.4 343.3 259.6 343.5 261.7 343.9 C263.8 344.3 265.8 344.9 267.8 345.4 C269.8 345.9 271.8 346.5 273.9 347.0 C275.9 347.6 277.9 348.2 279.9 348.8 C281.9 349.4 283.9 350.0 285.9 350.6 C287.9 351.3 289.9 352.0 291.9 352.6 C293.9 353.3 295.9 354.0 297.8 354.8 C299.8 355.5 301.8 356.3 303.7 357.1 C305.7 357.9 307.7 358.7 309.6 359.5 C311.5 360.3 313.5 361.2 315.4 362.1 C317.3 363.0 319.2 363.9 321.1 364.8 C323.0 365.7 324.9 366.7 326.8 367.7 C328.7 368.7 330.5 369.7 332.4 370.7 C334.2 371.8 336.1 372.8 337.9 373.9 C339.7 375.0 341.5 376.2 343.3 377.3 C345.1 378.5 346.9 379.7 348.7 380.9 C350.4 382.1 352.2 383.3 353.9 384.6 C355.6 385.9 357.3 387.2 359.0 388.5 C360.7 389.9 362.4 391.2 364.0 392.6 C365.6 394.0 367.2 395.5 368.7 396.9 C370.2 398.4 371.7 399.9 373.1 401.5 C374.5 403.0 375.9 404.6 377.1 406.2 C378.4 407.8 379.6 409.5 380.7 411.2 C381.8 412.9 382.9 414.7 383.8 416.4 C384.8 418.2 385.6 420.1 386.4 422.0 C387.1 423.8 387.7 425.8 388.3 427.7 C388.8 429.7 389.2 431.7 389.5 433.8 C389.8 435.9 389.9 438.0 389.9 440.2 C389.9 442.3 389.8 444.6 389.6 446.8 C389.3 449.0 388.8 452.2 388.6 453.3" stroke="#c8c010" fill="none" stroke-width="1.0" stroke-linecap="round" stroke-linejoin="round" />
<path d="M235.0 352.9 C236.1 352.9 239.3 352.7 241.4 352.9 C243.5 353.2 245.5 353.8 247.5 354.3 C249.6 354.9 251.5 355.6 253.5 356.4 C255.5 357.1 257.4 357.9 259.4 358.7 C261.3 359.6 263.2 360.4 265.1 361.3 C267.1 362.1 269.0 363.0 270.9 363.8 C272.8 364.7 274.7 365.6 276.5 366.5 C278.4 367.4 280.3 368.3 282.2 369.3 C284.0 370.2 285.9 371.2 287.7 372.1 C289.6 373.1 291.4 374.1 293.3 375.1 C295.1 376.1 296.9 377.1 298.8 378.1 C300.6 379.1 302.4 380.2 304.2 381.3 C306.0 382.3 307.8 383.4 309.6 384.5 C311.4 385.6 313.2 386.8 315.0 387.9 C316.8 389.1 318.6 390.2 320.3 391.4 C322.1 392.6 323.9 393.8 325.7 395.0 C327.4 396.3 329.2 397.5 330.9 398.8 C332.7 400.1 334.4 401.4 336.1 402.7 C337.8 404.1 339.5 405.4 341.2 406.8 C342.9 408.2 344.5 409.6 346.1 411.0 C347.7 412.5 349.3 413.9 350.8 415.4 C352.3 416.9 353.8 418.4 355.2 420.0 C356.6 421.5 358.0 423.1 359.3 424.7 C360.6 426.3 361.9 428.0 363.1 429.6 C364.3 431.3 365.4 433.0 366.5 434.8 C367.5 436.5 368.5 438.3 369.4 440.1 C370.3 441.9 371.2 443.8 371.9 445.6 C372.6 447.5 373.3 449.5 373.8 451.4 C374.4 453.4 374.9 455.4 375.2 457.4 C375.6 459.4 375.8 461.5 376.0 463.6 C376.1 465.7 376.2 467.9 376.1 470.1 C376.0 472.3 375.8 474.6 375.5 476.8 C375.2 479.0 374.5 482.2 374.3 483.3" stroke="#c8c010" fill="none" stroke-width="1.0" stroke-linecap="round" stroke-linejoin="round" />
<path d="M213.1 305.7 C213.2 306.7 213.7 309.6 213.8 311.6 C214.0 313.7 214.0 315.8 214.1 317.9 C214.1 320.1 214.2 322.3 214.2 324.4 C214.3 326.6 214.4 328.8 214.5 331.0 C214.7 333.1 214.9 335.2 215.2 337.3 C215.5 339.4 215.9 341.4 216.5 343.3 C217.0 345.3 217.7 347.1 218.5 348.9 C219.3 350.7 220.3 352.4 221.4 354.0 C222.5 355.6 223.7 357.1 225.0 358.5 C226.4 360.0 227.9 361.3 229.4 362.6 C231.0 363.9 232.7 365.1 234.4 366.2 C236.1 367.4 237.9 368.5 239.7 369.7 C241.5 370.8 243.3 371.9 245.1 373.0 C246.9 374.2 248.6 375.3 250.3 376.5 C252.0 377.7 253.7 378.9 255.4 380.1 C257.0 381.3 258.6 382.6 260.3 383.8 C261.9 385.1 263.5 386.3 265.1 387.6 C266.7 388.8 268.3 390.1 269.9 391.3 C271.5 392.6 273.2 393.8 274.9 395.0 C276.5 396.3 278.2 397.5 279.9 398.7 C281.6 399.9 283.3 401.1 285.1 402.3 C286.8 403.5 288.5 404.7 290.3 405.8 C292.0 407.0 293.8 408.2 295.5 409.4 C297.3 410.6 299.0 411.8 300.8 413.0 C302.5 414.2 304.2 415.4 306.0 416.6 C307.7 417.8 309.4 419.1 311.1 420.3 C312.8 421.5 314.5 422.8 316.1 424.1 C317.8 425.3 319.4 426.6 321.1 427.9 C322.7 429.2 324.3 430.6 325.8 431.9 C327.4 433.3 328.9 434.6 330.4 436.0 C331.9 437.4 333.3 438.9 334.7 440.3 C336.1 441.8 337.5 443.3 338.8 444.8 C340.1 446.3 341.4 447.9 342.6 449.5 C343.8 451.1 344.9 452.7 346.0 454.4 C347.1 456.1 348.2 457.8 349.2 459.5 C350.1 461.3 351.0 463.1 351.9 465.0 C352.7 466.8 353.5 468.7 354.2 470.7 C354.9 472.6 355.5 474.6 356.1 476.6 C356.6 478.7 357.1 480.8 357.5 482.8 C357.9 484.9 358.2 487.1 358.5 489.2 C358.7 491.3 358.9 493.4 359.0 495.5 C359.1 497.7 359.1 499.8 359.0 501.9 C359.0 503.9 358.8 506.0 358.6 508.0 C358.4 510.1 358.0 513.0 357.9 514.0" stroke="#c8c010" fill="none" stroke-width="1.0" stroke-linecap="round" stroke-linejoin="round" />
<path d="M202.4 298.0 C202.4 299.0 202.6 302.0 202.6 304.1 C202.5 306.1 202.4 308.2 202.3 310.3 C202.3 312.5 202.2 314.6 202.2 316.7 C202.2 318.8 202.2 321.0 202.3 323.1 C202.3 325.2 202.4 327.4 202.5 329.5 C202.6 331.7 202.7 333.8 202.9 335.9 C203.1 338.0 203.3 340.1 203.6 342.2 C203.9 344.3 204.2 346.4 204.6 348.5 C205.0 350.5 205.4 352.6 205.9 354.6 C206.4 356.6 207.0 358.6 207.6 360.5 C208.2 362.5 208.9 364.4 209.7 366.3 C210.4 368.1 211.3 370.0 212.2 371.8 C213.1 373.6 214.1 375.3 215.2 377.0 C216.3 378.7 217.4 380.4 218.6 382.1 C219.8 383.7 221.0 385.3 222.3 386.9 C223.6 388.5 225.0 390.0 226.4 391.5 C227.8 393.0 229.2 394.5 230.7 396.0 C232.2 397.4 233.7 398.9 235.3 400.3 C236.8 401.7 238.4 403.1 240.0 404.5 C241.6 405.9 243.3 407.2 244.9 408.6 C246.5 409.9 248.2 411.2 249.9 412.5 C251.5 413.9 253.2 415.2 254.9 416.5 C256.6 417.8 258.3 419.0 260.0 420.3 C261.7 421.6 263.5 422.9 265.2 424.2 C266.9 425.4 268.6 426.7 270.3 428.0 C272.0 429.2 273.7 430.5 275.4 431.8 C277.1 433.1 278.8 434.3 280.5 435.6 C282.2 436.9 283.9 438.2 285.5 439.5 C287.2 440.8 288.9 442.1 290.5 443.4 C292.1 444.7 293.7 446.1 295.3 447.4 C296.9 448.8 298.5 450.1 300.0 451.5 C301.6 452.9 303.1 454.3 304.6 455.7 C306.1 457.1 307.5 458.6 308.9 460.0 C310.4 461.5 311.8 463.0 313.1 464.5 C314.5 466.0 315.8 467.6 317.1 469.1 C318.4 470.7 319.6 472.3 320.8 474.0 C322.0 475.6 323.1 477.3 324.2 479.0 C325.3 480.7 326.4 482.4 327.4 484.2 C328.4 486.0 329.3 487.8 330.2 489.7 C331.1 491.6 331.9 493.5 332.7 495.4 C333.5 497.4 334.2 499.4 334.9 501.4 C335.5 503.5 336.1 505.6 336.6 507.7 C337.1 509.8 337.7 513.0 337.9 514.0" stroke="#c8c010" fill="none" stroke-width="1.0" stroke-linecap="round" stroke-linejoin="round" />
<text x="323.2" y="319.6" font-size="7.2" fill="#10dce4" font-weight="bold" textLength="17.2" lengthAdjust="spacingAndGlyphs">mc_3</text>
<text x="234.6" y="430.9" font-size="7.2" fill="#10dce4" font-weight="bold" textLength="17.1" lengthAdjust="spacingAndGlyphs">mc_2</text>
<text x="118.2" y="454.5" font-size="7.2" fill="#10dce4" font-weight="bold" textLength="16.5" lengthAdjust="spacingAndGlyphs">mc_1</text>
</g>
<clipPath id="cBR"><rect x="413" y="298" width="285.4" height="215.6"/></clipPath><g clip-path="url(#cBR)">
<line x1="589.6" y1="298.5" x2="551" y2="353.9" stroke="#a8a8a8" stroke-width="1.2" stroke-dasharray="1.2 3.7"/>
<line x1="551" y1="353.9" x2="512.9" y2="406.4" stroke="#a8a8a8" stroke-width="1.2" stroke-dasharray="1.2 3.7"/>
<line x1="512.9" y1="406.4" x2="443.2" y2="510.2" stroke="#a8a8a8" stroke-width="1.2" stroke-dasharray="1.2 3.7"/>
<path d="M445.4 298.5 L423.9 316.4 L413.2 365.7" stroke="#14b0bc" fill="none" stroke-width="1.0" stroke-linecap="round" stroke-linejoin="round" />
<path d="M413.2 403.2 C416.2 399.4 424.8 388.4 431.4 380.7 C438.0 373.0 446.1 364.2 452.9 357.1 C459.7 350.0 466.8 342.7 472.1 337.9 C477.5 333.1 481.6 330.3 485.0 328.2 C488.4 326.1 491.2 325.5 492.5 325.0" stroke="#14b0bc" fill="none" stroke-width="1.0" stroke-linecap="round" stroke-linejoin="round" />
<path d="M470.0 298.5 C470.0 299.5 470.3 302.5 470.3 304.6 C470.3 306.6 470.1 308.6 470.1 310.7 C470.0 312.7 470.0 314.8 470.0 316.8 C470.0 318.9 470.0 321.0 470.1 323.0 C470.1 325.1 470.2 327.2 470.3 329.3 C470.4 331.3 470.5 333.4 470.6 335.5 C470.8 337.6 471.0 339.6 471.2 341.7 C471.4 343.8 471.6 345.8 471.9 347.9 C472.2 350.0 472.5 352.0 472.8 354.1 C473.1 356.1 473.5 358.1 473.9 360.2 C474.3 362.2 474.7 364.2 475.2 366.2 C475.7 368.2 476.2 370.2 476.7 372.2 C477.2 374.2 477.8 376.2 478.4 378.1 C479.0 380.1 479.7 382.0 480.4 383.9 C481.1 385.8 481.8 387.7 482.6 389.6 C483.4 391.4 484.2 393.3 485.0 395.1 C485.9 396.9 486.8 398.7 487.7 400.5 C488.7 402.3 489.7 404.0 490.7 405.8 C491.7 407.5 492.8 409.2 493.9 410.8 C495.1 412.5 496.2 414.1 497.5 415.7 C498.7 417.3 500.0 418.9 501.3 420.4 C502.6 422.0 504.0 423.4 505.4 424.9 C506.8 426.4 508.2 427.8 509.7 429.2 C511.2 430.7 512.7 432.0 514.3 433.4 C515.8 434.8 517.4 436.1 519.0 437.5 C520.6 438.8 522.2 440.1 523.8 441.4 C525.5 442.7 527.1 444.0 528.8 445.3 C530.5 446.6 532.1 447.9 533.8 449.1 C535.5 450.4 537.2 451.7 538.9 452.9 C540.5 454.2 542.2 455.5 543.9 456.7 C545.6 458.0 547.2 459.3 548.9 460.6 C550.5 461.9 552.2 463.2 553.8 464.5 C555.4 465.8 557.0 467.1 558.6 468.4 C560.1 469.8 561.7 471.1 563.2 472.5 C564.7 473.9 566.2 475.3 567.6 476.7 C569.1 478.1 570.5 479.5 571.9 481.0 C573.3 482.4 574.6 483.9 576.0 485.4 C577.3 486.9 578.7 488.4 580.0 489.9 C581.3 491.5 582.6 493.0 583.9 494.6 C585.2 496.1 586.5 497.7 587.8 499.3 C589.1 500.9 590.4 502.5 591.7 504.1 C593.0 505.7 594.3 507.3 595.6 509.0 C596.8 510.6 598.7 513.2 599.3 514.0" stroke="#14b0bc" fill="none" stroke-width="1.0" stroke-linecap="round" stroke-linejoin="round" />
<path d="M491.4 298.5 C491.5 299.5 491.9 302.6 492.1 304.7 C492.4 306.7 492.5 308.8 492.7 310.9 C492.9 312.9 493.0 315.0 493.1 317.1 C493.2 319.1 493.3 321.2 493.4 323.3 C493.6 325.4 493.7 327.5 493.8 329.6 C494.0 331.6 494.2 333.7 494.4 335.8 C494.7 337.9 494.9 340.0 495.3 342.1 C495.7 344.2 496.1 346.4 496.6 348.4 C497.2 350.5 497.7 352.8 498.6 354.6 C499.4 356.4 500.4 358.2 501.7 359.2 C503.1 360.3 504.9 360.8 506.7 361.0 C508.6 361.1 510.9 360.6 512.9 360.0 C514.9 359.5 516.8 358.7 518.8 357.9 C520.7 357.1 522.6 356.0 524.4 355.0 C526.3 354.0 528.1 352.8 529.9 351.7 C531.8 350.5 533.6 349.3 535.4 348.2 C537.2 347.1 539.0 346.0 540.8 345.0 C542.7 344.0 544.5 343.1 546.4 342.2 C548.2 341.3 550.1 340.5 551.9 339.6 C553.8 338.7 555.6 337.9 557.5 337.1 C559.4 336.2 561.2 335.4 563.1 334.5 C565.0 333.6 566.8 332.7 568.7 331.7 C570.6 330.8 572.5 329.9 574.3 328.9 C576.2 328.0 578.1 327.0 579.9 326.1 C581.8 325.1 583.7 324.2 585.6 323.3 C587.4 322.3 589.3 321.4 591.2 320.5 C593.1 319.6 595.0 318.7 596.8 317.9 C598.7 317.0 601.6 315.8 602.5 315.4" stroke="#14b0bc" fill="none" stroke-width="1.0" stroke-linecap="round" stroke-linejoin="round" />
<path d="M602.5 315.4 C603.6 315.4 606.9 315.5 609.1 315.6 C611.3 315.8 613.5 316.0 615.7 316.2 C617.8 316.4 620.0 316.7 622.2 317.0 C624.4 317.4 626.5 317.8 628.7 318.2 C630.9 318.6 633.0 319.1 635.2 319.6 C637.3 320.1 639.5 320.7 641.6 321.3 C643.7 321.9 645.8 322.5 647.9 323.2 C650.0 323.9 652.1 324.6 654.1 325.4 C656.2 326.2 658.2 327.1 660.3 327.9 C662.3 328.8 664.3 329.7 666.3 330.7 C668.2 331.7 670.2 332.7 672.1 333.7 C674.1 334.8 676.0 335.9 677.8 337.0 C679.7 338.2 681.6 339.4 683.4 340.6 C685.2 341.8 687.0 343.1 688.8 344.4 C690.5 345.8 692.3 347.1 693.9 348.5 C695.6 349.9 698.1 352.2 698.9 352.9" stroke="#14b0bc" fill="none" stroke-width="1.0" stroke-linecap="round" stroke-linejoin="round" />
<path d="M516.1 359.3 C516.3 360.4 517.1 363.6 517.3 365.8 C517.5 367.9 517.5 370.1 517.4 372.2 C517.3 374.3 517.1 376.4 516.9 378.5 C516.6 380.5 516.2 382.6 515.8 384.6 C515.3 386.6 514.8 388.5 514.2 390.5 C513.6 392.5 512.9 394.4 512.1 396.3 C511.4 398.2 510.5 400.1 509.7 401.9 C508.8 403.8 507.8 405.6 506.9 407.4 C505.9 409.2 504.8 411.0 503.8 412.7 C502.7 414.5 501.6 416.2 500.4 417.9 C499.2 419.6 498.0 421.3 496.8 423.0 C495.5 424.7 494.3 426.3 493.0 427.9 C491.6 429.6 490.3 431.2 488.9 432.8 C487.6 434.3 486.1 435.9 484.7 437.5 C483.3 439.0 481.8 440.6 480.3 442.1 C478.9 443.6 477.3 445.1 475.8 446.6 C474.3 448.1 472.7 449.6 471.2 451.0 C469.6 452.5 468.0 453.9 466.4 455.4 C464.9 456.8 463.2 458.2 461.6 459.6 C460.0 461.0 458.4 462.4 456.8 463.8 C455.1 465.2 453.5 466.6 451.8 468.0 C450.2 469.3 448.5 470.7 446.9 472.0 C445.3 473.4 443.6 474.7 442.0 476.1 C440.3 477.4 438.7 478.7 437.1 480.0 C435.4 481.4 433.8 482.7 432.2 484.0 C430.6 485.3 429.0 486.6 427.4 487.9 C425.8 489.2 424.2 490.5 422.7 491.8 C421.1 493.1 419.6 494.4 418.0 495.7 C416.5 497.0 414.0 498.9 413.2 499.5" stroke="#14b0bc" fill="none" stroke-width="1.0" stroke-linecap="round" stroke-linejoin="round" />
<path d="M559.6 336.8 C560.1 337.8 561.6 340.5 562.3 342.5 C563.0 344.5 563.5 346.7 564.0 348.8 C564.5 350.9 564.9 352.9 565.3 355.0 C565.6 357.1 565.8 359.2 566.0 361.2 C566.2 363.3 566.3 365.3 566.3 367.4 C566.4 369.4 566.3 371.5 566.2 373.5 C566.1 375.5 565.9 377.5 565.7 379.5 C565.4 381.5 565.1 383.5 564.7 385.5 C564.4 387.5 563.9 389.5 563.5 391.5 C563.0 393.4 562.4 395.4 561.8 397.3 C561.2 399.3 560.6 401.2 559.9 403.1 C559.2 405.0 558.5 406.9 557.7 408.8 C556.9 410.7 556.0 412.6 555.2 414.4 C554.3 416.3 553.4 418.1 552.4 419.9 C551.5 421.7 550.5 423.6 549.4 425.3 C548.4 427.1 547.3 428.9 546.2 430.7 C545.1 432.4 544.0 434.2 542.8 435.9 C541.6 437.6 540.4 439.3 539.2 441.0 C538.0 442.7 536.7 444.4 535.4 446.1 C534.1 447.7 532.8 449.4 531.5 451.0 C530.1 452.6 528.8 454.2 527.4 455.8 C526.0 457.4 524.6 459.0 523.2 460.6 C521.8 462.2 520.3 463.7 518.8 465.2 C517.4 466.8 515.9 468.3 514.4 469.8 C512.9 471.3 511.4 472.8 509.9 474.3 C508.3 475.7 506.8 477.2 505.3 478.6 C503.7 480.1 502.2 481.5 500.6 482.9 C499.0 484.3 497.5 485.7 495.9 487.1 C494.3 488.5 492.7 489.9 491.1 491.2 C489.6 492.6 488.0 493.9 486.4 495.2 C484.8 496.5 483.2 497.8 481.6 499.1 C480.0 500.4 478.4 501.7 476.8 502.9 C475.3 504.2 473.7 505.4 472.1 506.7 C470.5 507.9 469.0 509.1 467.4 510.3 C465.8 511.5 463.3 513.4 462.5 514.0" stroke="#14b0bc" fill="none" stroke-width="1.0" stroke-linecap="round" stroke-linejoin="round" />
<path d="M616.4 316.4 C616.8 317.3 618.1 320.0 618.9 322.0 C619.7 323.9 620.5 326.1 621.2 328.2 C621.9 330.2 622.6 332.3 623.1 334.4 C623.7 336.5 624.2 338.5 624.6 340.6 C625.1 342.7 625.5 344.8 625.8 346.8 C626.1 348.9 626.3 351.0 626.5 353.0 C626.7 355.1 626.9 357.2 626.9 359.2 C627.0 361.3 627.0 363.4 627.0 365.4 C627.0 367.5 626.9 369.5 626.7 371.6 C626.6 373.6 626.4 375.6 626.1 377.7 C625.9 379.7 625.6 381.7 625.2 383.7 C624.9 385.7 624.5 387.7 624.0 389.7 C623.6 391.7 623.1 393.7 622.5 395.6 C622.0 397.6 621.4 399.6 620.7 401.5 C620.1 403.4 619.4 405.4 618.7 407.3 C618.0 409.2 617.2 411.1 616.4 413.0 C615.6 414.9 614.7 416.8 613.8 418.6 C612.9 420.5 612.0 422.3 611.1 424.2 C610.1 426.0 609.1 427.8 608.1 429.6 C607.1 431.4 606.0 433.2 604.9 435.0 C603.8 436.8 602.7 438.5 601.5 440.3 C600.4 442.0 599.2 443.8 598.0 445.5 C596.8 447.2 595.6 448.9 594.3 450.6 C593.0 452.3 591.8 454.0 590.5 455.7 C589.2 457.4 587.8 459.0 586.5 460.7 C585.2 462.3 583.8 463.9 582.4 465.5 C581.0 467.2 579.6 468.8 578.2 470.3 C576.8 471.9 575.4 473.5 574.0 475.1 C572.5 476.6 571.1 478.2 569.6 479.7 C568.2 481.2 566.7 482.8 565.2 484.3 C563.7 485.8 562.3 487.3 560.8 488.7 C559.3 490.2 557.8 491.7 556.3 493.1 C554.8 494.6 553.3 496.0 551.8 497.4 C550.3 498.9 548.8 500.3 547.3 501.7 C545.8 503.1 544.3 504.5 542.8 505.8 C541.3 507.2 539.8 508.5 538.3 509.9 C536.8 511.3 534.4 513.3 533.6 514.0" stroke="#14b0bc" fill="none" stroke-width="1.0" stroke-linecap="round" stroke-linejoin="round" />
<path d="M667.4 331.4 C667.5 332.5 667.7 335.6 667.9 337.7 C668.1 339.9 668.3 342.1 668.4 344.2 C668.5 346.4 668.6 348.5 668.6 350.7 C668.6 352.8 668.6 354.9 668.6 357.1 C668.5 359.2 668.4 361.3 668.3 363.5 C668.2 365.6 668.0 367.7 667.8 369.8 C667.5 371.9 667.3 374.0 667.0 376.1 C666.7 378.2 666.4 380.3 666.0 382.3 C665.6 384.4 665.2 386.5 664.8 388.5 C664.4 390.6 663.9 392.6 663.4 394.7 C662.9 396.7 662.3 398.8 661.7 400.8 C661.2 402.8 660.6 404.8 659.9 406.8 C659.3 408.8 658.6 410.8 657.9 412.8 C657.2 414.8 656.5 416.8 655.7 418.8 C654.9 420.7 654.1 422.7 653.3 424.6 C652.5 426.6 651.6 428.5 650.8 430.5 C649.9 432.4 649.0 434.3 648.1 436.2 C647.1 438.1 646.2 440.0 645.2 441.9 C644.2 443.8 643.2 445.7 642.2 447.5 C641.1 449.4 640.1 451.3 639.0 453.1 C637.9 455.0 636.8 456.8 635.7 458.6 C634.6 460.4 633.5 462.2 632.3 464.0 C631.2 465.8 630.0 467.6 628.8 469.4 C627.6 471.1 626.4 472.9 625.1 474.6 C623.9 476.4 622.6 478.1 621.4 479.8 C620.1 481.5 618.8 483.2 617.5 484.9 C616.2 486.6 614.9 488.3 613.6 490.0 C612.3 491.6 610.9 493.3 609.6 494.9 C608.2 496.5 606.8 498.2 605.5 499.8 C604.1 501.4 602.7 503.0 601.3 504.5 C599.9 506.1 598.5 507.6 597.1 509.2 C595.7 510.8 593.6 513.2 592.9 514.0" stroke="#14b0bc" fill="none" stroke-width="1.0" stroke-linecap="round" stroke-linejoin="round" />
<path d="M697.9 351.8 C697.9 352.8 698.0 356.0 697.9 358.0 C697.8 360.1 697.5 362.2 697.3 364.2 C697.1 366.3 696.9 368.4 696.6 370.4 C696.4 372.5 696.1 374.5 695.8 376.6 C695.4 378.6 695.1 380.7 694.8 382.7 C694.4 384.7 694.0 386.8 693.6 388.8 C693.2 390.8 692.8 392.9 692.3 394.9 C691.9 396.9 691.4 398.9 690.9 401.0 C690.4 403.0 689.9 405.0 689.4 407.0 C688.9 409.0 688.3 411.0 687.7 413.0 C687.2 415.0 686.6 417.0 685.9 418.9 C685.3 420.9 684.7 422.9 684.0 424.9 C683.4 426.8 682.7 428.8 682.0 430.8 C681.3 432.7 680.6 434.7 679.9 436.6 C679.2 438.6 678.4 440.5 677.6 442.4 C676.9 444.4 676.1 446.3 675.3 448.2 C674.5 450.1 673.7 452.0 672.8 454.0 C672.0 455.9 671.1 457.8 670.3 459.6 C669.4 461.5 668.5 463.4 667.6 465.3 C666.7 467.2 665.8 469.0 664.9 470.9 C663.9 472.8 663.0 474.6 662.0 476.5 C661.1 478.3 660.1 480.1 659.1 482.0 C658.1 483.8 657.1 485.6 656.1 487.4 C655.1 489.2 654.1 491.0 653.0 492.8 C652.0 494.6 650.9 496.4 649.8 498.2 C648.8 499.9 647.7 501.7 646.6 503.5 C645.5 505.2 644.4 506.9 643.3 508.7 C642.2 510.5 640.5 513.1 640.0 514.0" stroke="#14b0bc" fill="none" stroke-width="1.0" stroke-linecap="round" stroke-linejoin="round" />
<path d="M698.9 412.7 C698.7 413.8 698.1 417.0 697.6 419.1 C697.1 421.2 696.6 423.3 696.0 425.4 C695.5 427.5 694.9 429.6 694.3 431.7 C693.6 433.7 693.0 435.8 692.3 437.8 C691.6 439.9 690.9 441.9 690.1 443.9 C689.4 446.0 688.6 448.0 687.8 450.0 C687.0 452.0 686.2 454.0 685.3 456.0 C684.5 458.0 683.6 460.0 682.7 462.0 C681.9 463.9 680.9 465.9 680.0 467.9 C679.1 469.8 678.2 471.8 677.2 473.7 C676.3 475.7 675.3 477.6 674.3 479.5 C673.3 481.5 672.3 483.4 671.4 485.3 C670.4 487.3 669.3 489.2 668.3 491.1 C667.3 493.0 666.3 494.9 665.3 496.9 C664.3 498.8 663.3 500.7 662.2 502.6 C661.2 504.5 660.2 506.4 659.2 508.3 C658.2 510.2 656.6 513.1 656.1 514.0" stroke="#14b0bc" fill="none" stroke-width="1.0" stroke-linecap="round" stroke-linejoin="round" />
<path d="M504.3 361.4 C503.6 361.4 501.4 361.1 500.0 361.6 C498.6 362.1 498.9 361.4 495.7 364.6 C492.5 367.8 486.4 373.7 480.7 380.7 C475.0 387.7 467.8 399.3 461.4 406.4 C455.0 413.5 450.1 415.7 442.1 423.4 C434.1 431.1 418.0 447.6 413.2 452.4" stroke="#14b0bc" fill="none" stroke-width="1.0" stroke-linecap="round" stroke-linejoin="round" />
<path d="M602.5 315.4 C603.0 316.3 604.5 318.9 605.5 320.8 C606.5 322.6 607.4 324.7 608.3 326.7 C609.1 328.7 609.9 330.7 610.6 332.7 C611.2 334.7 611.9 336.7 612.4 338.7 C613.0 340.7 613.4 342.8 613.8 344.8 C614.2 346.8 614.6 348.8 614.8 350.9 C615.1 352.9 615.3 354.9 615.5 356.9 C615.6 359.0 615.7 361.0 615.7 363.0 C615.7 365.1 615.7 367.1 615.6 369.1 C615.5 371.1 615.3 373.1 615.1 375.1 C614.9 377.2 614.6 379.2 614.3 381.2 C614.0 383.2 613.6 385.2 613.2 387.1 C612.8 389.1 612.3 391.1 611.8 393.1 C611.3 395.0 610.7 397.0 610.1 398.9 C609.5 400.9 608.8 402.8 608.1 404.7 C607.4 406.6 606.7 408.5 605.9 410.4 C605.1 412.3 604.3 414.2 603.4 416.1 C602.5 417.9 601.6 419.8 600.7 421.6 C599.8 423.4 598.8 425.3 597.8 427.1 C596.8 428.9 595.8 430.7 594.7 432.5 C593.6 434.2 592.5 436.0 591.4 437.8 C590.3 439.5 589.1 441.2 587.9 443.0 C586.7 444.7 585.5 446.4 584.3 448.1 C583.0 449.8 581.8 451.4 580.5 453.1 C579.2 454.8 577.9 456.4 576.5 458.1 C575.2 459.7 573.9 461.3 572.5 462.9 C571.1 464.5 569.7 466.1 568.3 467.7 C566.9 469.2 565.5 470.8 564.0 472.3 C562.6 473.9 561.2 475.4 559.7 476.9 C558.2 478.4 556.8 479.9 555.3 481.4 C553.8 482.9 552.3 484.3 550.8 485.8 C549.3 487.2 547.8 488.6 546.3 490.0 C544.7 491.5 543.2 492.8 541.7 494.2 C540.2 495.6 538.6 497.0 537.1 498.3 C535.6 499.7 534.0 501.0 532.5 502.3 C531.0 503.6 529.5 504.9 527.9 506.2 C526.4 507.5 524.9 508.7 523.4 510.0 C521.8 511.3 519.4 513.3 518.6 514.0" stroke="#1ed2de" fill="none" stroke-width="1.25" stroke-linecap="round" stroke-linejoin="round" />
<path d="M582.1 325.0 C583.1 325.4 586.0 326.6 588.0 327.4 C589.9 328.2 591.8 328.9 593.8 329.6 C595.8 330.4 597.8 331.0 599.8 331.7 C601.9 332.4 603.9 333.0 606.0 333.6 C608.1 334.2 610.2 334.8 612.3 335.4 C614.4 336.0 616.5 336.6 618.6 337.1 C620.7 337.7 622.9 338.3 625.0 338.8 C627.1 339.4 629.3 340.0 631.4 340.6 C633.5 341.2 635.7 341.8 637.8 342.4 C639.9 343.0 642.0 343.6 644.1 344.3 C646.2 345.0 648.2 345.6 650.3 346.4 C652.3 347.1 654.4 347.8 656.4 348.6 C658.3 349.4 660.3 350.3 662.3 351.1 C664.2 352.0 666.1 352.9 668.0 353.9 C669.8 354.9 671.7 355.9 673.4 357.0 C675.2 358.1 677.0 359.3 678.6 360.5 C680.3 361.7 682.0 363.0 683.5 364.4 C685.1 365.8 686.7 367.2 688.1 368.7 C689.6 370.3 691.0 371.9 692.3 373.6 C693.6 375.3 695.0 377.1 696.1 379.0 C697.2 380.9 698.4 384.0 698.9 385.0" stroke="#c8c010" fill="none" stroke-width="1.0" stroke-linecap="round" stroke-linejoin="round" />
<path d="M560.7 336.8 C561.7 337.2 564.6 338.5 566.5 339.4 C568.4 340.2 570.2 341.2 572.0 342.0 C573.9 342.9 575.8 343.7 577.7 344.5 C579.5 345.3 581.4 346.1 583.3 346.9 C585.3 347.7 587.2 348.4 589.1 349.2 C591.0 349.9 593.0 350.6 594.9 351.4 C596.8 352.1 598.8 352.8 600.8 353.5 C602.7 354.2 604.7 354.9 606.6 355.6 C608.6 356.3 610.6 357.0 612.6 357.7 C614.6 358.4 616.5 359.1 618.5 359.8 C620.5 360.5 622.5 361.2 624.5 362.0 C626.5 362.7 628.5 363.4 630.5 364.2 C632.5 364.9 634.5 365.7 636.5 366.5 C638.4 367.3 640.4 368.1 642.4 368.9 C644.3 369.7 646.3 370.6 648.2 371.5 C650.1 372.4 652.0 373.3 653.8 374.3 C655.7 375.2 657.5 376.2 659.3 377.3 C661.1 378.3 662.9 379.4 664.6 380.5 C666.3 381.7 668.0 382.8 669.6 384.1 C671.3 385.3 672.8 386.6 674.4 387.9 C675.9 389.3 677.3 390.7 678.7 392.1 C680.1 393.6 681.4 395.1 682.6 396.7 C683.8 398.2 684.9 399.9 685.9 401.6 C687.0 403.3 687.9 405.1 688.7 406.9 C689.6 408.7 690.3 410.6 690.9 412.6 C691.5 414.6 692.0 416.6 692.3 418.7 C692.7 420.9 692.9 423.1 693.0 425.3 C693.0 427.5 692.6 430.9 692.5 432.0" stroke="#c8c010" fill="none" stroke-width="1.0" stroke-linecap="round" stroke-linejoin="round" />
<path d="M538.6 347.5 C539.6 347.9 542.5 348.9 544.5 349.7 C546.4 350.5 548.3 351.4 550.2 352.2 C552.1 353.1 553.9 354.0 555.8 354.8 C557.7 355.7 559.6 356.5 561.5 357.4 C563.3 358.3 565.2 359.1 567.1 360.0 C569.0 360.9 570.8 361.8 572.7 362.6 C574.6 363.5 576.5 364.3 578.3 365.2 C580.2 366.1 582.1 366.9 584.0 367.8 C585.9 368.6 587.8 369.5 589.7 370.3 C591.6 371.1 593.5 371.9 595.4 372.8 C597.3 373.6 599.2 374.4 601.1 375.2 C603.0 376.0 605.0 376.8 606.9 377.7 C608.8 378.5 610.7 379.3 612.6 380.1 C614.5 381.0 616.4 381.8 618.3 382.7 C620.2 383.6 622.1 384.5 624.0 385.4 C625.9 386.3 627.8 387.2 629.6 388.2 C631.5 389.2 633.3 390.2 635.1 391.2 C637.0 392.3 638.8 393.4 640.5 394.5 C642.3 395.6 644.1 396.8 645.8 398.0 C647.5 399.1 649.2 400.4 650.8 401.7 C652.5 402.9 654.1 404.3 655.6 405.6 C657.2 407.0 658.7 408.4 660.1 409.8 C661.6 411.3 663.0 412.8 664.3 414.3 C665.6 415.8 666.9 417.4 668.1 419.0 C669.3 420.7 670.4 422.3 671.5 424.0 C672.5 425.7 673.5 427.5 674.4 429.3 C675.2 431.1 676.0 432.9 676.7 434.8 C677.4 436.7 678.1 438.7 678.6 440.7 C679.1 442.6 679.5 444.7 679.8 446.8 C680.1 448.9 680.3 451.0 680.3 453.2 C680.4 455.4 680.3 457.7 680.2 459.9 C680.1 462.1 679.7 465.2 679.6 466.3" stroke="#c8c010" fill="none" stroke-width="1.0" stroke-linecap="round" stroke-linejoin="round" />
<path d="M517.1 358.9 C518.1 359.3 520.9 360.6 522.8 361.5 C524.7 362.4 526.6 363.3 528.5 364.2 C530.4 365.1 532.2 366.0 534.1 366.9 C536.0 367.8 537.9 368.7 539.8 369.6 C541.7 370.5 543.5 371.4 545.4 372.3 C547.3 373.3 549.2 374.2 551.1 375.1 C552.9 376.0 554.8 376.9 556.7 377.8 C558.5 378.7 560.4 379.6 562.3 380.6 C564.1 381.5 566.0 382.4 567.9 383.4 C569.7 384.3 571.6 385.3 573.4 386.2 C575.3 387.2 577.1 388.1 579.0 389.1 C580.8 390.1 582.7 391.1 584.5 392.1 C586.3 393.1 588.2 394.1 590.0 395.1 C591.8 396.1 593.6 397.2 595.4 398.2 C597.2 399.3 599.0 400.3 600.8 401.4 C602.6 402.5 604.4 403.6 606.2 404.7 C608.0 405.8 609.8 406.9 611.5 408.1 C613.3 409.2 615.0 410.4 616.8 411.5 C618.5 412.7 620.3 413.9 622.0 415.1 C623.8 416.4 625.5 417.6 627.2 418.9 C628.9 420.1 630.6 421.4 632.2 422.7 C633.9 424.1 635.5 425.4 637.1 426.8 C638.7 428.1 640.3 429.5 641.8 431.0 C643.3 432.4 644.8 433.9 646.2 435.3 C647.6 436.8 649.0 438.4 650.3 439.9 C651.6 441.5 652.9 443.1 654.1 444.7 C655.2 446.4 656.4 448.1 657.4 449.8 C658.4 451.5 659.4 453.3 660.3 455.1 C661.1 456.9 661.9 458.7 662.6 460.6 C663.3 462.5 664.0 464.5 664.5 466.5 C665.0 468.4 665.4 470.5 665.7 472.6 C666.0 474.6 666.2 476.7 666.3 478.9 C666.4 481.0 666.4 483.2 666.3 485.4 C666.2 487.6 665.9 489.9 665.6 492.1 C665.3 494.3 664.8 497.3 664.6 498.4" stroke="#c8c010" fill="none" stroke-width="1.0" stroke-linecap="round" stroke-linejoin="round" />
<path d="M492.5 307.9 C492.7 308.9 493.2 311.7 493.5 313.7 C493.7 315.7 493.8 317.7 493.9 319.8 C494.0 321.8 494.1 323.9 494.1 326.0 C494.1 328.2 494.1 330.3 494.2 332.4 C494.2 334.6 494.3 336.7 494.4 338.8 C494.5 340.9 494.7 343.0 494.9 345.1 C495.2 347.1 495.5 349.2 495.9 351.2 C496.4 353.1 496.9 355.1 497.5 356.9 C498.2 358.8 498.9 360.6 499.8 362.4 C500.7 364.1 501.7 365.8 502.9 367.4 C504.0 369.0 505.3 370.5 506.7 371.9 C508.1 373.3 509.6 374.7 511.2 376.0 C512.8 377.3 514.4 378.6 516.1 379.8 C517.8 381.0 519.6 382.2 521.3 383.4 C523.0 384.6 524.8 385.7 526.5 386.8 C528.2 388.0 529.9 389.1 531.6 390.2 C533.3 391.4 534.9 392.5 536.6 393.6 C538.2 394.8 539.8 395.9 541.4 397.0 C543.1 398.1 544.7 399.3 546.3 400.4 C548.0 401.5 549.7 402.6 551.3 403.7 C553.0 404.8 554.7 405.9 556.4 407.1 C558.2 408.2 559.9 409.3 561.6 410.4 C563.4 411.5 565.1 412.6 566.9 413.7 C568.7 414.8 570.4 415.9 572.2 417.1 C574.0 418.2 575.7 419.3 577.5 420.4 C579.3 421.6 581.1 422.7 582.8 423.9 C584.6 425.0 586.3 426.2 588.1 427.4 C589.8 428.5 591.6 429.7 593.3 430.9 C595.0 432.1 596.7 433.3 598.4 434.6 C600.1 435.8 601.8 437.0 603.4 438.3 C605.1 439.6 606.7 440.8 608.3 442.1 C609.9 443.4 611.5 444.8 613.0 446.1 C614.6 447.4 616.1 448.8 617.6 450.2 C619.1 451.6 620.5 453.0 621.9 454.4 C623.3 455.9 624.7 457.3 626.0 458.8 C627.3 460.3 628.6 461.9 629.9 463.4 C631.1 465.0 632.3 466.5 633.4 468.2 C634.5 469.8 635.6 471.4 636.6 473.1 C637.7 474.8 638.6 476.5 639.6 478.3 C640.5 480.0 641.3 481.8 642.1 483.6 C642.9 485.5 643.6 487.3 644.3 489.3 C644.9 491.2 645.5 493.1 646.0 495.1 C646.6 497.1 647.0 499.1 647.4 501.2 C647.7 503.3 648.1 505.5 648.2 507.6 C648.4 509.7 648.1 512.9 648.1 514.0" stroke="#c8c010" fill="none" stroke-width="1.0" stroke-linecap="round" stroke-linejoin="round" />
<path d="M480.3 298.5 C480.4 299.5 480.5 302.5 480.6 304.5 C480.7 306.5 480.7 308.5 480.8 310.5 C480.8 312.6 480.9 314.6 481.0 316.7 C481.0 318.7 481.1 320.8 481.2 322.9 C481.3 325.0 481.3 327.1 481.5 329.2 C481.6 331.3 481.7 333.4 481.9 335.5 C482.0 337.7 482.2 339.8 482.4 341.9 C482.6 344.0 482.8 346.1 483.1 348.2 C483.4 350.4 483.6 352.5 484.0 354.5 C484.3 356.6 484.7 358.7 485.1 360.8 C485.5 362.8 486.0 364.8 486.5 366.9 C487.0 368.9 487.5 370.9 488.1 372.8 C488.7 374.8 489.4 376.7 490.1 378.6 C490.8 380.5 491.6 382.4 492.4 384.2 C493.3 386.0 494.2 387.8 495.1 389.5 C496.1 391.3 497.1 393.0 498.2 394.6 C499.3 396.3 500.5 397.9 501.7 399.4 C503.0 401.0 504.3 402.5 505.7 403.9 C507.1 405.4 508.6 406.7 510.2 408.1 C511.7 409.4 513.4 410.7 515.0 411.9 C516.7 413.2 518.4 414.4 520.1 415.6 C521.9 416.8 523.6 417.9 525.4 419.1 C527.2 420.3 528.9 421.4 530.7 422.6 C532.5 423.7 534.2 424.9 536.0 426.0 C537.7 427.2 539.5 428.3 541.2 429.5 C543.0 430.7 544.7 431.9 546.4 433.1 C548.1 434.3 549.8 435.5 551.4 436.7 C553.1 437.9 554.7 439.2 556.4 440.4 C558.0 441.7 559.6 443.0 561.2 444.3 C562.8 445.6 564.4 446.9 566.0 448.2 C567.5 449.5 569.1 450.8 570.7 452.2 C572.2 453.5 573.8 454.9 575.3 456.2 C576.9 457.6 578.5 458.9 580.0 460.3 C581.6 461.7 583.1 463.1 584.6 464.5 C586.2 465.9 587.7 467.3 589.2 468.7 C590.7 470.1 592.2 471.6 593.7 473.1 C595.1 474.5 596.6 476.0 598.0 477.5 C599.4 479.0 600.8 480.5 602.2 482.1 C603.5 483.6 604.9 485.2 606.2 486.8 C607.4 488.4 608.7 490.1 609.9 491.7 C611.1 493.4 612.3 495.1 613.4 496.8 C614.5 498.5 615.6 500.3 616.6 502.1 C617.6 503.9 618.6 505.7 619.4 507.6 C620.3 509.5 621.4 512.4 621.8 513.4" stroke="#c8c010" fill="none" stroke-width="1.0" stroke-linecap="round" stroke-linejoin="round" />
<text x="567.1" y="338.5" font-size="7.2" fill="#10dce4" font-weight="bold" textLength="16.8" lengthAdjust="spacingAndGlyphs">mc_3</text>
<text x="507.5" y="432.4" font-size="7.2" fill="#10dce4" font-weight="bold" textLength="17.1" lengthAdjust="spacingAndGlyphs">mc_2</text>
</g>
</svg>
</body>
</html>
